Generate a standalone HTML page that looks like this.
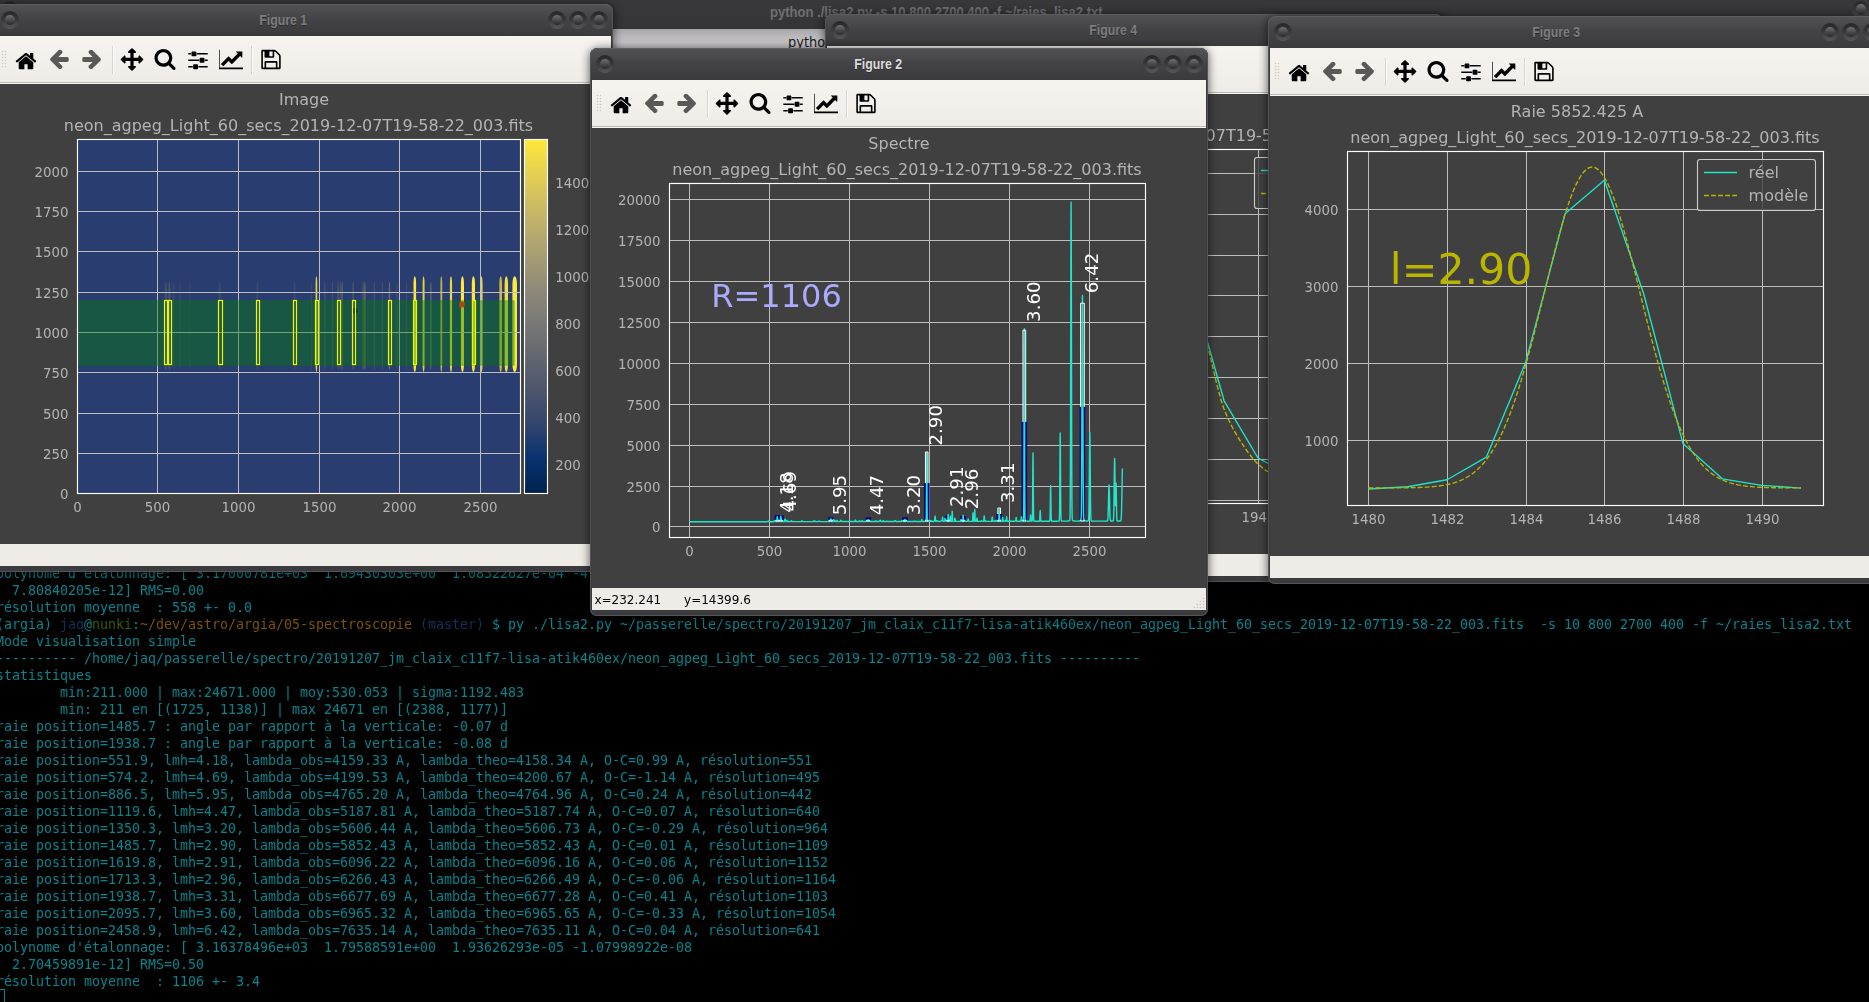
<!DOCTYPE html><html><head><meta charset="utf-8"><title>Figures</title><style>
html,body{margin:0;padding:0;background:#000}
body{width:1869px;height:1002px;overflow:hidden;position:relative;font-family:"DejaVu Sans","Liberation Sans",sans-serif}
svg text{font-family:"DejaVu Sans","Liberation Sans",sans-serif}
.tt{position:absolute;left:0;top:0;width:1869px;height:29px;background:linear-gradient(#38383b,#353538);}
.tt span{position:absolute;left:770px;top:3px;font:bold 15px "Liberation Sans",sans-serif;color:#6f6f72;white-space:nowrap;transform-origin:0 0;transform:scaleX(.87)}
.tab{position:absolute;left:0;top:29px;width:1869px;height:19px;background:linear-gradient(#a9a7aa,#c7c5c8 70%,#c9c7ca);}
.tab span{position:absolute;left:788px;top:4.5px;font:14px "DejaVu Sans","Liberation Sans",sans-serif;color:#1c1c1c;white-space:nowrap;transform-origin:0 0;transform:scaleX(.93)}
.term{position:absolute;left:-4px;top:565px;font:13.288px/17px "DejaVu Sans Mono","Liberation Mono",monospace;color:#07848c;white-space:pre;will-change:transform;letter-spacing:0.0133px}
.term div{height:17px}
.c1{color:#1b2f5c}.c2{color:#3c5c00}.c3{color:#7c5400}.c4{color:#15305f}
.cur{position:absolute;left:-1px;top:989px;width:6px;height:14px;border:1px solid #07848c;box-sizing:border-box}
.win{position:absolute;width:618px;height:568px;background:#3b3b3d;border-radius:8px 8px 7px 7px;box-shadow:inset 0 0 0 1px #545456,0 1px 9px 1px rgba(0,0,0,.55)}
.tbar{position:absolute;left:0;top:0;width:618px;height:32px;border-radius:8px 8px 0 0;background:linear-gradient(#535355,#444446 45%,#3a3a3c);box-shadow:inset 0 1px 0 #5d5d5f,inset 1px 0 0 #545456,inset -1px 0 0 #545456}
.ttl{position:absolute;left:24px;right:65px;top:8px;text-align:center;font:bold 14px "Liberation Sans",sans-serif;color:#7c7c7f;text-shadow:0 1px 0 #2c2c2e}
.ttl span{display:inline-block;transform:scaleX(.88)}
.ttl.act{color:#dcdcdc}
.btn{position:absolute;top:7px;width:18px;height:18px;border-radius:50%;background:linear-gradient(#262628,#39393b 50%,#58585a)}
.btn:after{content:"";position:absolute;left:3.7px;top:3.7px;width:10.6px;height:10.6px;border-radius:50%;background:linear-gradient(#707072,#4a4a4c 50%,#2a2a2c)}
.tb{position:absolute;left:2px;top:32px;width:614px;height:48px;background:linear-gradient(#f7f4f0 0,#efece7 46px,#bebab5 46px,#bebab5 47px,#f7f5f2 47px)}
.grip{position:absolute;left:4px;top:14px;width:6px;height:18px;background-image:radial-gradient(circle at 1.5px 1.5px,#cbc7c1 0.6px,transparent 1.1px);background-size:3px 3px}
.ic{position:absolute;top:11px}
.sep{position:absolute;top:10px;width:1px;height:28px;background:#d8d4ce;border-right:1px solid #fbfaf8}
.cv{position:absolute;left:2px;top:80px;width:614px;height:460px;background:#404040;overflow:hidden}
.cv svg{display:block;will-change:transform}
.sb{position:absolute;left:2px;top:540px;width:614px;height:22px;background:#efece7;font:12px/22px "DejaVu Sans","Liberation Sans",sans-serif;color:#000;white-space:pre}
.sg{position:absolute;left:600px;top:8px}
.sb span{position:absolute;left:2.4px;top:1px}
</style></head><body><div class="tt"><div class="btn" style="left:0.5px;top:0.5px"></div><div class="btn" style="left:1852px;top:0.5px"></div><span>python ./lisa2.py -s 10 800 2700 400 -f ~/raies_lisa2.txt</span></div><div class="tab"><span>python ./lisa2.py -s 10 800 2700 400 -f ~/raies_lisa2.txt</span></div><div class="term"><div>polynome d'étalonnage: [ 3.17000781e+03  1.69430303e+00  1.08522627e-04 -4.42380135e-08</div><div>  7.80840205e-12] RMS=0.00</div><div>résolution moyenne  : 558 +- 0.0</div><div>(argia) <span class="c1">jaq</span>@<span class="c2">nunki</span>:<span class="c3">~/dev/astro/argia/05-spectroscopie</span> <span class="c4">(master)</span> $ py ./lisa2.py ~/passerelle/spectro/20191207_jm_claix_c11f7-lisa-atik460ex/neon_agpeg_Light_60_secs_2019-12-07T19-58-22_003.fits  -s 10 800 2700 400 -f ~/raies_lisa2.txt</div><div>Mode visualisation simple</div><div>---------- /home/jaq/passerelle/spectro/20191207_jm_claix_c11f7-lisa-atik460ex/neon_agpeg_Light_60_secs_2019-12-07T19-58-22_003.fits ----------</div><div>statistiques</div><div>        min:211.000 | max:24671.000 | moy:530.053 | sigma:1192.483</div><div>        min: 211 en [(1725, 1138)] | max 24671 en [(2388, 1177)]</div><div>raie position=1485.7 : angle par rapport à la verticale: -0.07 d</div><div>raie position=1938.7 : angle par rapport à la verticale: -0.08 d</div><div>raie position=551.9, lmh=4.18, lambda_obs=4159.33 A, lambda_theo=4158.34 A, O-C=0.99 A, résolution=551</div><div>raie position=574.2, lmh=4.69, lambda_obs=4199.53 A, lambda_theo=4200.67 A, O-C=-1.14 A, résolution=495</div><div>raie position=886.5, lmh=5.95, lambda_obs=4765.20 A, lambda_theo=4764.96 A, O-C=0.24 A, résolution=442</div><div>raie position=1119.6, lmh=4.47, lambda_obs=5187.81 A, lambda_theo=5187.74 A, O-C=0.07 A, résolution=640</div><div>raie position=1350.3, lmh=3.20, lambda_obs=5606.44 A, lambda_theo=5606.73 A, O-C=-0.29 A, résolution=964</div><div>raie position=1485.7, lmh=2.90, lambda_obs=5852.43 A, lambda_theo=5852.43 A, O-C=0.01 A, résolution=1109</div><div>raie position=1619.8, lmh=2.91, lambda_obs=6096.22 A, lambda_theo=6096.16 A, O-C=0.06 A, résolution=1152</div><div>raie position=1713.3, lmh=2.96, lambda_obs=6266.43 A, lambda_theo=6266.49 A, O-C=-0.06 A, résolution=1164</div><div>raie position=1938.7, lmh=3.31, lambda_obs=6677.69 A, lambda_theo=6677.28 A, O-C=0.41 A, résolution=1103</div><div>raie position=2095.7, lmh=3.60, lambda_obs=6965.32 A, lambda_theo=6965.65 A, O-C=-0.33 A, résolution=1054</div><div>raie position=2458.9, lmh=6.42, lambda_obs=7635.14 A, lambda_theo=7635.11 A, O-C=0.04 A, résolution=641</div><div>polynome d'étalonnage: [ 3.16378496e+03  1.79588591e+00  1.93626293e-05 -1.07998922e-08</div><div>  2.70459891e-12] RMS=0.50</div><div>résolution moyenne  : 1106 +- 3.4</div></div><div class="cur"></div><div class="win " style="left:825px;top:14px;z-index:2"><div class="tbar"><div class="btn" style="left:6px"></div><div class="ttl"><span>Figure 4</span></div><div class="btn" style="right:47px"></div><div class="btn" style="right:26px"></div><div class="btn" style="right:5px"></div></div><div class="tb"><div class="grip"></div><svg class="ic" style="left:17px" viewBox="0 0 72 72" width="24" height="24"><path fill="#000" d="M 57.86 45.94 C 57.86 45.87 57.86 45.79 57.82 45.72 L 35.99 27.73 L 14.18 45.72 C 14.18 45.79 14.14 45.87 14.14 45.94 L 14.14 64.15 C 14.14 65.48 15.24 66.58 16.57 66.58 L 31.14 66.58 L 31.14 52.02 L 40.86 52.02 L 40.86 66.58 L 55.43 66.58 C 56.76 66.58 57.86 65.48 57.86 64.15 z M 66.32 43.33 C 66.73 42.83 66.66 42.03 66.17 41.62 L 57.86 34.71 L 57.86 19.23 C 57.86 18.55 57.33 18.02 56.64 18.02 L 49.36 18.02 C 48.67 18.02 48.14 18.55 48.14 19.23 L 48.14 26.62 L 38.88 18.89 C 37.29 17.56 34.71 17.56 33.12 18.89 L 5.83 41.62 C 5.34 42.03 5.27 42.83 5.68 43.33 L 8.03 46.13 C 8.22 46.35 8.53 46.51 8.83 46.55 C 9.17 46.59 9.47 46.47 9.74 46.28 L 35.99 24.39 L 62.26 46.28 C 62.48 46.47 62.75 46.55 63.06 46.55 C 63.09 46.55 63.13 46.55 63.17 46.55 C 63.47 46.51 63.78 46.35 63.97 46.13 z"/></svg><svg class="ic" style="left:50px" viewBox="0 0 72 72" width="24" height="24"><path fill="#5b5957" d="M 65.14 35.01 C 65.14 32.42 63.43 30.15 60.7 30.15 L 33.99 30.15 L 45.11 19.04 C 46.02 18.12 46.55 16.87 46.55 15.58 C 46.55 14.29 46.02 13.03 45.11 12.13 L 42.26 9.32 C 41.34 8.41 40.13 7.88 38.85 7.88 C 37.55 7.88 36.3 8.41 35.39 9.32 L 10.69 33.99 C 9.82 34.9 9.29 36.14 9.29 37.44 C 9.29 38.73 9.82 39.98 10.69 40.85 L 35.39 65.6 C 36.3 66.47 37.55 67 38.85 67 C 40.13 67 41.39 66.47 42.26 65.6 L 45.11 62.71 C 46.02 61.84 46.55 60.58 46.55 59.3 C 46.55 58.01 46.02 56.76 45.11 55.88 L 33.99 44.73 L 60.7 44.73 C 63.43 44.73 65.14 42.44 65.14 39.86 z"/></svg><svg class="ic" style="left:83px" viewBox="0 0 72 72" width="24" height="24"><path fill="#5b5957" d="M 62.71 37.44 C 62.71 36.14 62.22 34.9 61.31 34.02 L 36.61 9.32 C 35.69 8.41 34.44 7.88 33.15 7.88 C 31.87 7.88 30.64 8.41 29.74 9.32 L 26.89 12.16 C 25.98 13.03 25.45 14.29 25.45 15.58 C 25.45 16.87 25.98 18.12 26.89 19 L 38.01 30.15 L 11.3 30.15 C 8.57 30.15 6.86 32.42 6.86 35.01 L 6.86 39.86 C 6.86 42.44 8.57 44.73 11.3 44.73 L 38.01 44.73 L 26.89 55.84 C 25.98 56.76 25.45 58.01 25.45 59.3 C 25.45 60.58 25.98 61.84 26.89 62.75 L 29.74 65.6 C 30.64 66.47 31.87 67 33.15 67 C 34.44 67 35.69 66.47 36.61 65.6 L 61.31 40.89 C 62.22 39.98 62.71 38.73 62.71 37.44"/></svg><svg class="ic" style="left:123px" viewBox="0 0 72 72" width="24" height="24"><path fill="#000" d="M 70 37.44 C 70 36.8 69.73 36.19 69.28 35.74 L 59.57 26.02 C 59.11 25.56 58.5 25.3 57.86 25.3 C 56.53 25.3 55.43 26.4 55.43 27.73 L 55.43 32.58 L 40.86 32.58 L 40.86 18.02 L 45.71 18.02 C 47.04 18.02 48.14 16.91 48.14 15.58 C 48.14 14.94 47.88 14.33 47.42 13.87 L 37.71 4.16 C 37.25 3.71 36.65 3.44 36 3.44 C 35.35 3.44 34.75 3.71 34.29 4.16 L 24.58 13.87 C 24.12 14.33 23.86 14.94 23.86 15.58 C 23.86 16.91 24.96 18.02 26.29 18.02 L 31.14 18.02 L 31.14 32.58 L 16.57 32.58 L 16.57 27.73 C 16.57 26.4 15.47 25.3 14.14 25.3 C 13.5 25.3 12.89 25.56 12.43 26.02 L 2.72 35.74 C 2.27 36.19 2 36.8 2 37.44 C 2 38.09 2.27 38.69 2.72 39.15 L 12.43 48.86 C 12.89 49.32 13.5 49.58 14.14 49.58 C 15.47 49.58 16.57 48.49 16.57 47.16 L 16.57 42.3 L 31.14 42.3 L 31.14 56.87 L 26.29 56.87 C 24.96 56.87 23.86 57.97 23.86 59.3 C 23.86 59.94 24.12 60.55 24.58 61.01 L 34.29 70.72 C 34.75 71.17 35.35 71.44 36 71.44 C 36.65 71.44 37.25 71.17 37.71 70.72 L 47.42 61.01 C 47.88 60.55 48.14 59.94 48.14 59.3 C 48.14 57.97 47.04 56.87 45.71 56.87 L 40.86 56.87 L 40.86 42.3 L 55.43 42.3 L 55.43 47.16 C 55.43 48.49 56.53 49.58 57.86 49.58 C 58.5 49.58 59.11 49.32 59.57 48.86 L 69.28 39.15 C 69.73 38.69 70 38.09 70 37.44"/></svg><svg class="ic" style="left:156px" viewBox="0 0 72 72" width="24" height="24"><path fill="#000" d="M 48.14 32.59 C 48.14 41.96 40.51 49.59 31.14 49.59 C 21.77 49.59 14.14 41.96 14.14 32.59 C 14.14 23.22 21.77 15.59 31.14 15.59 C 40.51 15.59 48.14 23.22 48.14 32.59 M 67.57 64.16 C 67.57 62.87 67.04 61.62 66.17 60.75 L 53.15 47.73 C 56.22 43.29 57.86 37.98 57.86 32.59 C 57.86 17.82 45.91 5.87 31.14 5.87 C 16.38 5.87 4.43 17.82 4.43 32.59 C 4.43 47.35 16.38 59.3 31.14 59.3 C 36.53 59.3 41.84 57.66 46.28 54.59 L 59.3 67.58 C 60.17 68.48 61.42 69.01 62.72 69.01 C 65.37 69.01 67.57 66.81 67.57 64.16"/></svg><svg class="ic" style="left:189px" viewBox="0 0 72 72" width="24" height="24"><path fill="#000" d="M 20.21 56.87 L 6.86 56.87 L 6.86 61.73 L 20.21 61.73 z M 33.57 52.02 L 23.86 52.02 C 22.53 52.02 21.42 53.11 21.42 54.44 L 21.42 64.16 C 21.42 65.49 22.53 66.58 23.86 66.58 L 33.57 66.58 C 34.9 66.58 36 65.49 36 64.16 L 36 54.44 C 36 53.11 34.9 52.02 33.57 52.02 M 39.64 37.44 L 6.86 37.44 L 6.86 42.3 L 39.64 42.3 z M 15.36 18.02 L 6.86 18.02 L 6.86 22.87 L 15.36 22.87 z M 65.14 56.87 L 37.21 56.87 L 37.21 61.73 L 65.14 61.73 z M 28.71 13.16 L 19 13.16 C 17.67 13.16 16.57 14.26 16.57 15.58 L 16.57 25.3 C 16.57 26.62 17.67 27.73 19 27.73 L 28.71 27.73 C 30.04 27.73 31.14 26.62 31.14 25.3 L 31.14 15.58 C 31.14 14.26 30.04 13.16 28.71 13.16 M 53 32.58 L 43.29 32.58 C 41.96 32.58 40.86 33.69 40.86 35.02 L 40.86 44.73 C 40.86 46.06 41.96 47.16 43.29 47.16 L 53 47.16 C 54.33 47.16 55.42 46.06 55.42 44.73 L 55.42 35.02 C 55.42 33.69 54.33 32.58 53 32.58 M 65.14 37.44 L 56.64 37.44 L 56.64 42.3 L 65.14 42.3 z M 65.14 18.02 L 32.36 18.02 L 32.36 22.87 L 65.14 22.87 z"/></svg><svg class="ic" style="left:222px" viewBox="0 0 72 72" width="24" height="24"><path fill="#000" d="M 74.86 61.73 L 2 61.73 L 2 8.3 L -2.86 8.3 L -2.86 66.58 L 74.86 66.58 z M 70 14.37 C 70 13.69 69.47 13.16 68.79 13.16 L 52.28 13.16 C 51.22 13.16 50.65 14.45 51.45 15.24 L 56.04 19.83 L 38.43 37.44 L 29.59 28.6 C 29.09 28.11 28.34 28.11 27.84 28.6 L 5.64 50.8 L 12.93 58.08 L 28.71 42.3 L 37.56 51.15 C 38.05 51.63 38.8 51.63 39.3 51.15 L 63.33 27.12 L 67.92 31.71 C 68.71 32.51 70 31.94 70 30.87 z"/></svg><svg class="ic" style="left:262px" viewBox="0 0 72 72" width="24" height="24"><path fill="#000" d="M 21.42 61.73 L 21.42 47.16 L 50.57 47.16 L 50.57 61.73 z M 55.42 61.73 L 55.42 45.94 C 55.42 43.93 53.8 42.3 51.79 42.3 L 20.21 42.3 C 18.2 42.3 16.57 43.93 16.57 45.94 L 16.57 61.73 L 11.71 61.73 L 11.71 13.16 L 16.57 13.16 L 16.57 28.94 C 16.57 30.96 18.2 32.58 20.21 32.58 L 42.07 32.58 C 44.09 32.58 45.71 30.96 45.71 28.94 L 45.71 13.16 C 46.48 13.16 47.95 13.77 48.48 14.3 L 59.14 24.96 C 59.64 25.45 60.29 27.01 60.29 27.73 L 60.29 61.73 z M 40.86 26.52 C 40.86 27.16 40.28 27.73 39.64 27.73 L 32.36 27.73 C 31.71 27.73 31.14 27.16 31.14 26.52 L 31.14 14.37 C 31.14 13.72 31.71 13.16 32.36 13.16 L 39.64 13.16 C 40.28 13.16 40.86 13.72 40.86 14.37 z M 65.14 27.73 C 65.14 25.72 64.01 22.95 62.56 21.5 L 51.94 10.88 C 50.49 9.44 47.72 8.3 45.71 8.3 L 10.5 8.3 C 8.49 8.3 6.86 9.93 6.86 11.94 L 6.86 62.94 C 6.86 64.96 8.49 66.58 10.5 66.58 L 61.5 66.58 C 63.51 66.58 65.14 64.96 65.14 62.94 z"/></svg><div class="sep" style="left:115px"></div><div class="sep" style="left:254px"></div></div><div class="cv"><svg viewBox="0 0 614 460" width="614" height="460"><path d="M77.5 79.5H553.5M77.5 120.5H553.5M77.5 161.5H553.5M77.5 201.5H553.5M77.5 242.5H553.5M77.5 283.5H553.5M77.5 324.5H553.5M77.5 365.5H553.5M77.5 406.5H553.5M92.5 55.5V409.5M160.5 55.5V409.5M228.5 55.5V409.5M295.5 55.5V409.5M363.5 55.5V409.5M431.5 55.5V409.5M499.5 55.5V409.5" stroke="#bdbdbd" stroke-width="1" fill="none"/><polyline points="92,404 125.9,403 159.8,401 193.7,396 227.6,376 261.5,286 295.4,146 329.3,76 363.2,186.6 397.1,306.8 431,364 464.9,382 498.8,389 532.7,392" fill="none" stroke="#1fe5cb" stroke-width="1.35" stroke-linejoin="round"/><polyline points="108.95,393 110.64,393 112.34,392.99 114.04,392.97 115.73,392.95 117.43,392.92 119.12,392.89 120.81,392.85 122.51,392.81 124.21,392.76 125.9,392.71 127.59,392.65 129.29,392.59 130.99,392.53 132.68,392.46 134.38,392.39 136.07,392.32 137.76,392.24 139.46,392.16 141.16,392.08 142.85,392 144.54,391.91 146.24,391.79 147.94,391.66 149.63,391.51 151.32,391.33 153.02,391.14 154.71,390.94 156.41,390.72 158.11,390.48 159.8,390.22 161.49,389.96 163.19,389.67 164.89,389.38 166.58,389.07 168.28,388.75 169.97,388.42 171.66,388.08 173.36,387.73 175.06,387.37 176.75,387 178.44,386.6 180.14,386.17 181.84,385.68 183.53,385.16 185.23,384.59 186.92,383.99 188.61,383.34 190.31,382.65 192.01,381.93 193.7,381.17 195.39,380.37 197.09,379.54 198.79,378.67 200.48,377.77 202.18,376.81 203.87,375.7 205.56,374.44 207.26,373.06 208.96,371.58 210.65,370 212.34,368.32 214.04,366.5 215.74,364.55 217.43,362.49 219.12,360.32 220.82,358.04 222.51,355.67 224.21,353.21 225.91,350.67 227.6,348.06 229.29,345.39 230.99,342.64 232.69,339.8 234.38,336.83 236.08,333.72 237.77,330.43 239.46,326.94 241.16,323.22 242.86,319.25 244.55,315 246.24,310.21 247.94,304.71 249.64,298.64 251.33,292.1 253.03,285.24 254.72,278.17 256.41,271.01 258.11,263.9 259.81,256.95 261.5,250.29 263.19,243.7 264.89,237.07 266.59,230.4 268.28,223.71 269.98,217.02 271.67,210.34 273.36,203.68 275.06,197.06 276.76,190.5 278.45,184 280.14,177.4 281.84,170.6 283.54,163.7 285.23,156.8 286.93,149.99 288.62,143.39 290.31,137.08 292.01,131.18 293.71,125.79 295.4,121 297.09,116.49 298.79,111.88 300.49,107.25 302.18,102.65 303.88,98.15 305.57,93.79 307.26,89.63 308.96,85.75 310.66,82.19 312.35,79.02 314.04,76.29 315.74,74.06 317.44,72.4 319.13,71.36 320.82,71 322.52,71.36 324.21,72.4 325.91,74.06 327.61,76.29 329.3,79.02 330.99,82.19 332.69,85.75 334.39,89.63 336.08,93.79 337.77,98.15 339.47,102.65 341.16,107.25 342.86,111.88 344.56,116.49 346.25,121 347.94,125.79 349.64,131.18 351.34,137.08 353.03,143.39 354.73,149.99 356.42,156.8 358.11,163.7 359.81,170.6 361.51,177.4 363.2,184 364.89,190.5 366.59,197.06 368.29,203.68 369.98,210.34 371.68,217.02 373.37,223.71 375.06,230.4 376.76,237.07 378.46,243.7 380.15,250.29 381.84,256.95 383.54,263.9 385.24,271.01 386.93,278.17 388.62,285.24 390.32,292.1 392.01,298.64 393.71,304.71 395.41,310.21 397.1,315 398.79,319.25 400.49,323.22 402.19,326.94 403.88,330.43 405.57,333.72 407.27,336.83 408.96,339.8 410.66,342.64 412.36,345.39 414.05,348.06 415.74,350.67 417.44,353.21 419.14,355.67 420.83,358.04 422.52,360.32 424.22,362.49 425.91,364.55 427.61,366.5 429.31,368.32 431,370 432.69,371.58 434.39,373.06 436.09,374.44 437.78,375.7 439.48,376.81 441.17,377.77 442.86,378.67 444.56,379.54 446.26,380.37 447.95,381.17 449.64,381.93 451.34,382.65 453.04,383.34 454.73,383.99 456.43,384.59 458.12,385.16 459.81,385.68 461.51,386.17 463.21,386.6 464.9,387 466.59,387.37 468.29,387.73 469.99,388.08 471.68,388.42 473.38,388.75 475.07,389.07 476.76,389.38 478.46,389.67 480.16,389.96 481.85,390.22 483.54,390.48 485.24,390.72 486.94,390.94 488.63,391.14 490.32,391.33 492.02,391.51 493.71,391.66 495.41,391.79 497.11,391.91 498.8,392 500.49,392.08 502.19,392.16 503.89,392.24 505.58,392.32 507.27,392.39 508.97,392.46 510.66,392.53 512.36,392.59 514.06,392.65 515.75,392.71 517.44,392.76 519.14,392.81 520.84,392.85 522.53,392.89 524.23,392.92 525.92,392.95 527.61,392.97 529.31,392.99 531.01,393 532.7,393" fill="none" stroke="#bab600" stroke-width="1.35" stroke-dasharray="4.9 2.15"/><rect x="77.5" y="55.5" width="476" height="354" fill="none" stroke="#fff" stroke-width="1.15"/><text x="307" y="21" font-size="16" text-anchor="middle" fill="#b4b4b4" >Raie 6677.282 A</text><text x="315" y="47" font-size="16" text-anchor="middle" fill="#b4b4b4" >neon_agpeg_Light_60_secs_2019-12-07T19-58-22_003.fits</text><text x="92.5" y="428" font-size="13.33" text-anchor="middle" fill="#b4b4b4" >1932</text><text x="160.5" y="428" font-size="13.33" text-anchor="middle" fill="#b4b4b4" >1934</text><text x="228.5" y="428" font-size="13.33" text-anchor="middle" fill="#b4b4b4" >1936</text><text x="295.5" y="428" font-size="13.33" text-anchor="middle" fill="#b4b4b4" >1938</text><text x="363.5" y="428" font-size="13.33" text-anchor="middle" fill="#b4b4b4" >1940</text><text x="431.5" y="428" font-size="13.33" text-anchor="middle" fill="#b4b4b4" >1942</text><text x="499.5" y="428" font-size="13.33" text-anchor="middle" fill="#b4b4b4" >1944</text><text x="68.5" y="125.5" font-size="13.33" text-anchor="end" fill="#b4b4b4" >1000</text><text x="68.5" y="166.35" font-size="13.33" text-anchor="end" fill="#b4b4b4" >900</text><text x="68.5" y="207.2" font-size="13.33" text-anchor="end" fill="#b4b4b4" >800</text><text x="68.5" y="248.05" font-size="13.33" text-anchor="end" fill="#b4b4b4" >700</text><text x="68.5" y="288.9" font-size="13.33" text-anchor="end" fill="#b4b4b4" >600</text><text x="68.5" y="329.75" font-size="13.33" text-anchor="end" fill="#b4b4b4" >500</text><text x="68.5" y="370.6" font-size="13.33" text-anchor="end" fill="#b4b4b4" >400</text><rect x="427.5" y="63.5" width="118" height="51" rx="2.6" fill="#404040" fill-opacity="0.8" stroke="#ccc" stroke-width="1.1"/><path d="M434 76.5H467" stroke="#1fe5cb" stroke-width="1.35"/><path d="M434 99.5H467" stroke="#bab600" stroke-width="1.35" stroke-dasharray="4.9 2.15"/><text x="478.6" y="81.9" font-size="16" text-anchor="start" fill="#b4b4b4" >réel</text><text x="478.6" y="105.2" font-size="16" text-anchor="start" fill="#b4b4b4" >modèle</text></svg></div><div class="sb"><svg class="sg" width="14" height="14" viewBox="0 0 14 14"><g fill="#c4c0ba"><circle cx="11.5" cy="2.4" r="0.75"/><circle cx="8.4" cy="5.5" r="0.75"/><circle cx="11.5" cy="5.5" r="0.75"/><circle cx="5.3" cy="8.5" r="0.75"/><circle cx="8.4" cy="8.5" r="0.75"/><circle cx="11.5" cy="8.5" r="0.75"/><circle cx="2.3" cy="11.6" r="0.75"/><circle cx="5.3" cy="11.6" r="0.75"/><circle cx="8.4" cy="11.6" r="0.75"/><circle cx="11.5" cy="11.6" r="0.75"/></g></svg></div></div><div class="win " style="left:-5px;top:4px;z-index:3"><div class="tbar"><div class="btn" style="left:6px"></div><div class="ttl"><span>Figure 1</span></div><div class="btn" style="right:47px"></div><div class="btn" style="right:26px"></div><div class="btn" style="right:5px"></div></div><div class="tb"><div class="grip"></div><svg class="ic" style="left:17px" viewBox="0 0 72 72" width="24" height="24"><path fill="#000" d="M 57.86 45.94 C 57.86 45.87 57.86 45.79 57.82 45.72 L 35.99 27.73 L 14.18 45.72 C 14.18 45.79 14.14 45.87 14.14 45.94 L 14.14 64.15 C 14.14 65.48 15.24 66.58 16.57 66.58 L 31.14 66.58 L 31.14 52.02 L 40.86 52.02 L 40.86 66.58 L 55.43 66.58 C 56.76 66.58 57.86 65.48 57.86 64.15 z M 66.32 43.33 C 66.73 42.83 66.66 42.03 66.17 41.62 L 57.86 34.71 L 57.86 19.23 C 57.86 18.55 57.33 18.02 56.64 18.02 L 49.36 18.02 C 48.67 18.02 48.14 18.55 48.14 19.23 L 48.14 26.62 L 38.88 18.89 C 37.29 17.56 34.71 17.56 33.12 18.89 L 5.83 41.62 C 5.34 42.03 5.27 42.83 5.68 43.33 L 8.03 46.13 C 8.22 46.35 8.53 46.51 8.83 46.55 C 9.17 46.59 9.47 46.47 9.74 46.28 L 35.99 24.39 L 62.26 46.28 C 62.48 46.47 62.75 46.55 63.06 46.55 C 63.09 46.55 63.13 46.55 63.17 46.55 C 63.47 46.51 63.78 46.35 63.97 46.13 z"/></svg><svg class="ic" style="left:50px" viewBox="0 0 72 72" width="24" height="24"><path fill="#5b5957" d="M 65.14 35.01 C 65.14 32.42 63.43 30.15 60.7 30.15 L 33.99 30.15 L 45.11 19.04 C 46.02 18.12 46.55 16.87 46.55 15.58 C 46.55 14.29 46.02 13.03 45.11 12.13 L 42.26 9.32 C 41.34 8.41 40.13 7.88 38.85 7.88 C 37.55 7.88 36.3 8.41 35.39 9.32 L 10.69 33.99 C 9.82 34.9 9.29 36.14 9.29 37.44 C 9.29 38.73 9.82 39.98 10.69 40.85 L 35.39 65.6 C 36.3 66.47 37.55 67 38.85 67 C 40.13 67 41.39 66.47 42.26 65.6 L 45.11 62.71 C 46.02 61.84 46.55 60.58 46.55 59.3 C 46.55 58.01 46.02 56.76 45.11 55.88 L 33.99 44.73 L 60.7 44.73 C 63.43 44.73 65.14 42.44 65.14 39.86 z"/></svg><svg class="ic" style="left:83px" viewBox="0 0 72 72" width="24" height="24"><path fill="#5b5957" d="M 62.71 37.44 C 62.71 36.14 62.22 34.9 61.31 34.02 L 36.61 9.32 C 35.69 8.41 34.44 7.88 33.15 7.88 C 31.87 7.88 30.64 8.41 29.74 9.32 L 26.89 12.16 C 25.98 13.03 25.45 14.29 25.45 15.58 C 25.45 16.87 25.98 18.12 26.89 19 L 38.01 30.15 L 11.3 30.15 C 8.57 30.15 6.86 32.42 6.86 35.01 L 6.86 39.86 C 6.86 42.44 8.57 44.73 11.3 44.73 L 38.01 44.73 L 26.89 55.84 C 25.98 56.76 25.45 58.01 25.45 59.3 C 25.45 60.58 25.98 61.84 26.89 62.75 L 29.74 65.6 C 30.64 66.47 31.87 67 33.15 67 C 34.44 67 35.69 66.47 36.61 65.6 L 61.31 40.89 C 62.22 39.98 62.71 38.73 62.71 37.44"/></svg><svg class="ic" style="left:123px" viewBox="0 0 72 72" width="24" height="24"><path fill="#000" d="M 70 37.44 C 70 36.8 69.73 36.19 69.28 35.74 L 59.57 26.02 C 59.11 25.56 58.5 25.3 57.86 25.3 C 56.53 25.3 55.43 26.4 55.43 27.73 L 55.43 32.58 L 40.86 32.58 L 40.86 18.02 L 45.71 18.02 C 47.04 18.02 48.14 16.91 48.14 15.58 C 48.14 14.94 47.88 14.33 47.42 13.87 L 37.71 4.16 C 37.25 3.71 36.65 3.44 36 3.44 C 35.35 3.44 34.75 3.71 34.29 4.16 L 24.58 13.87 C 24.12 14.33 23.86 14.94 23.86 15.58 C 23.86 16.91 24.96 18.02 26.29 18.02 L 31.14 18.02 L 31.14 32.58 L 16.57 32.58 L 16.57 27.73 C 16.57 26.4 15.47 25.3 14.14 25.3 C 13.5 25.3 12.89 25.56 12.43 26.02 L 2.72 35.74 C 2.27 36.19 2 36.8 2 37.44 C 2 38.09 2.27 38.69 2.72 39.15 L 12.43 48.86 C 12.89 49.32 13.5 49.58 14.14 49.58 C 15.47 49.58 16.57 48.49 16.57 47.16 L 16.57 42.3 L 31.14 42.3 L 31.14 56.87 L 26.29 56.87 C 24.96 56.87 23.86 57.97 23.86 59.3 C 23.86 59.94 24.12 60.55 24.58 61.01 L 34.29 70.72 C 34.75 71.17 35.35 71.44 36 71.44 C 36.65 71.44 37.25 71.17 37.71 70.72 L 47.42 61.01 C 47.88 60.55 48.14 59.94 48.14 59.3 C 48.14 57.97 47.04 56.87 45.71 56.87 L 40.86 56.87 L 40.86 42.3 L 55.43 42.3 L 55.43 47.16 C 55.43 48.49 56.53 49.58 57.86 49.58 C 58.5 49.58 59.11 49.32 59.57 48.86 L 69.28 39.15 C 69.73 38.69 70 38.09 70 37.44"/></svg><svg class="ic" style="left:156px" viewBox="0 0 72 72" width="24" height="24"><path fill="#000" d="M 48.14 32.59 C 48.14 41.96 40.51 49.59 31.14 49.59 C 21.77 49.59 14.14 41.96 14.14 32.59 C 14.14 23.22 21.77 15.59 31.14 15.59 C 40.51 15.59 48.14 23.22 48.14 32.59 M 67.57 64.16 C 67.57 62.87 67.04 61.62 66.17 60.75 L 53.15 47.73 C 56.22 43.29 57.86 37.98 57.86 32.59 C 57.86 17.82 45.91 5.87 31.14 5.87 C 16.38 5.87 4.43 17.82 4.43 32.59 C 4.43 47.35 16.38 59.3 31.14 59.3 C 36.53 59.3 41.84 57.66 46.28 54.59 L 59.3 67.58 C 60.17 68.48 61.42 69.01 62.72 69.01 C 65.37 69.01 67.57 66.81 67.57 64.16"/></svg><svg class="ic" style="left:189px" viewBox="0 0 72 72" width="24" height="24"><path fill="#000" d="M 20.21 56.87 L 6.86 56.87 L 6.86 61.73 L 20.21 61.73 z M 33.57 52.02 L 23.86 52.02 C 22.53 52.02 21.42 53.11 21.42 54.44 L 21.42 64.16 C 21.42 65.49 22.53 66.58 23.86 66.58 L 33.57 66.58 C 34.9 66.58 36 65.49 36 64.16 L 36 54.44 C 36 53.11 34.9 52.02 33.57 52.02 M 39.64 37.44 L 6.86 37.44 L 6.86 42.3 L 39.64 42.3 z M 15.36 18.02 L 6.86 18.02 L 6.86 22.87 L 15.36 22.87 z M 65.14 56.87 L 37.21 56.87 L 37.21 61.73 L 65.14 61.73 z M 28.71 13.16 L 19 13.16 C 17.67 13.16 16.57 14.26 16.57 15.58 L 16.57 25.3 C 16.57 26.62 17.67 27.73 19 27.73 L 28.71 27.73 C 30.04 27.73 31.14 26.62 31.14 25.3 L 31.14 15.58 C 31.14 14.26 30.04 13.16 28.71 13.16 M 53 32.58 L 43.29 32.58 C 41.96 32.58 40.86 33.69 40.86 35.02 L 40.86 44.73 C 40.86 46.06 41.96 47.16 43.29 47.16 L 53 47.16 C 54.33 47.16 55.42 46.06 55.42 44.73 L 55.42 35.02 C 55.42 33.69 54.33 32.58 53 32.58 M 65.14 37.44 L 56.64 37.44 L 56.64 42.3 L 65.14 42.3 z M 65.14 18.02 L 32.36 18.02 L 32.36 22.87 L 65.14 22.87 z"/></svg><svg class="ic" style="left:222px" viewBox="0 0 72 72" width="24" height="24"><path fill="#000" d="M 74.86 61.73 L 2 61.73 L 2 8.3 L -2.86 8.3 L -2.86 66.58 L 74.86 66.58 z M 70 14.37 C 70 13.69 69.47 13.16 68.79 13.16 L 52.28 13.16 C 51.22 13.16 50.65 14.45 51.45 15.24 L 56.04 19.83 L 38.43 37.44 L 29.59 28.6 C 29.09 28.11 28.34 28.11 27.84 28.6 L 5.64 50.8 L 12.93 58.08 L 28.71 42.3 L 37.56 51.15 C 38.05 51.63 38.8 51.63 39.3 51.15 L 63.33 27.12 L 67.92 31.71 C 68.71 32.51 70 31.94 70 30.87 z"/></svg><svg class="ic" style="left:262px" viewBox="0 0 72 72" width="24" height="24"><path fill="#000" d="M 21.42 61.73 L 21.42 47.16 L 50.57 47.16 L 50.57 61.73 z M 55.42 61.73 L 55.42 45.94 C 55.42 43.93 53.8 42.3 51.79 42.3 L 20.21 42.3 C 18.2 42.3 16.57 43.93 16.57 45.94 L 16.57 61.73 L 11.71 61.73 L 11.71 13.16 L 16.57 13.16 L 16.57 28.94 C 16.57 30.96 18.2 32.58 20.21 32.58 L 42.07 32.58 C 44.09 32.58 45.71 30.96 45.71 28.94 L 45.71 13.16 C 46.48 13.16 47.95 13.77 48.48 14.3 L 59.14 24.96 C 59.64 25.45 60.29 27.01 60.29 27.73 L 60.29 61.73 z M 40.86 26.52 C 40.86 27.16 40.28 27.73 39.64 27.73 L 32.36 27.73 C 31.71 27.73 31.14 27.16 31.14 26.52 L 31.14 14.37 C 31.14 13.72 31.71 13.16 32.36 13.16 L 39.64 13.16 C 40.28 13.16 40.86 13.72 40.86 14.37 z M 65.14 27.73 C 65.14 25.72 64.01 22.95 62.56 21.5 L 51.94 10.88 C 50.49 9.44 47.72 8.3 45.71 8.3 L 10.5 8.3 C 8.49 8.3 6.86 9.93 6.86 11.94 L 6.86 62.94 C 6.86 64.96 8.49 66.58 10.5 66.58 L 61.5 66.58 C 63.51 66.58 65.14 64.96 65.14 62.94 z"/></svg><div class="sep" style="left:115px"></div><div class="sep" style="left:254px"></div></div><div class="cv"><svg viewBox="0 0 614 460" width="614" height="460"><defs><linearGradient id="cb" x1="0" y1="1" x2="0" y2="0"><stop offset="0.0" stop-color="#00224e"/><stop offset="0.1" stop-color="#083370"/><stop offset="0.2" stop-color="#35456c"/><stop offset="0.3" stop-color="#4f576c"/><stop offset="0.4" stop-color="#666970"/><stop offset="0.5" stop-color="#7d7c78"/><stop offset="0.6" stop-color="#948e77"/><stop offset="0.7" stop-color="#aea371"/><stop offset="0.8" stop-color="#c8b866"/><stop offset="0.9" stop-color="#e5cf52"/><stop offset="1.0" stop-color="#fee838"/></linearGradient><linearGradient id="st" x1="0" y1="0" x2="0" y2="1"><stop offset="0" stop-color="#fee838" stop-opacity="0"/><stop offset="0.12" stop-color="#fee838" stop-opacity="1"/><stop offset="0.9" stop-color="#fee838" stop-opacity="1"/><stop offset="1" stop-color="#fee838" stop-opacity="0"/></linearGradient></defs><rect x="80.5" y="55.5" width="443.0" height="354.0" fill="#293d70"/><rect x="167.8" y="197.47" width="2" height="88.61" rx="1.0" ry="8" fill="#fee838" opacity="0.13"/><rect x="171.4" y="197.47" width="2" height="88.61" rx="1.0" ry="8" fill="#fee838" opacity="0.15"/><rect x="175.56" y="197.47" width="2" height="88.61" rx="1.0" ry="8" fill="#fee838" opacity="0.07"/><rect x="182.01" y="197.47" width="2" height="88.61" rx="1.0" ry="8" fill="#fee838" opacity="0.05"/><rect x="191.69" y="197.47" width="2" height="88.61" rx="1.0" ry="8" fill="#fee838" opacity="0.04"/><rect x="221.77" y="197.47" width="2" height="88.61" rx="1.0" ry="8" fill="#fee838" opacity="0.09"/><rect x="259.37" y="197.47" width="2" height="88.61" rx="1.0" ry="8" fill="#fee838" opacity="0.08"/><rect x="296.58" y="197.47" width="2" height="88.61" rx="1.0" ry="8" fill="#fee838" opacity="0.08"/><rect x="313.72" y="197.47" width="1.5" height="88.61" rx="0.75" ry="8" fill="#fee838" opacity="0.07"/><rect x="318.57" y="192.15" width="1.7" height="95.85" rx="0.85" ry="8" fill="#fee838" opacity="0.85"/><rect x="327.11" y="197.47" width="1.5" height="88.61" rx="0.75" ry="8" fill="#fee838" opacity="0.12"/><rect x="334.69" y="197.47" width="1.5" height="88.61" rx="0.75" ry="8" fill="#fee838" opacity="0.1"/><rect x="340.3" y="197.47" width="1.5" height="88.61" rx="0.75" ry="8" fill="#fee838" opacity="0.16"/><rect x="342.43" y="197.47" width="1.5" height="88.61" rx="0.75" ry="8" fill="#fee838" opacity="0.12"/><rect x="344.37" y="197.47" width="1.5" height="88.61" rx="0.75" ry="8" fill="#fee838" opacity="0.22"/><rect x="355.39" y="197.47" width="1.5" height="88.61" rx="0.75" ry="8" fill="#fee838" opacity="0.16"/><rect x="365.34" y="197.47" width="1.5" height="88.61" rx="0.75" ry="8" fill="#fee838" opacity="0.17"/><rect x="367.11" y="197.47" width="1.5" height="88.61" rx="0.75" ry="8" fill="#fee838" opacity="0.25"/><rect x="376.63" y="197.47" width="1.5" height="88.61" rx="0.75" ry="8" fill="#fee838" opacity="0.12"/><rect x="384.69" y="197.47" width="1.5" height="88.61" rx="0.75" ry="8" fill="#fee838" opacity="0.1"/><rect x="391.74" y="197.47" width="1.5" height="88.61" rx="0.75" ry="8" fill="#fee838" opacity="0.28"/><rect x="399.21" y="197.47" width="1.5" height="88.61" rx="0.75" ry="8" fill="#fee838" opacity="0.1"/><rect x="408.89" y="197.47" width="1.5" height="88.61" rx="0.75" ry="8" fill="#fee838" opacity="0.08"/><rect x="416.52" y="192.15" width="2.6" height="95.85" rx="1.3" ry="8" fill="#fee838" opacity="1"/><rect x="425.58" y="192.15" width="2" height="95.85" rx="1.0" ry="8" fill="#fee838" opacity="0.85"/><rect x="433.08" y="197.47" width="1.5" height="88.61" rx="0.75" ry="8" fill="#fee838" opacity="0.25"/><rect x="443.42" y="192.15" width="1.8" height="95.85" rx="0.9" ry="8" fill="#fee838" opacity="0.7"/><rect x="452.9" y="192.15" width="2.2" height="95.85" rx="1.1" ry="8" fill="#fee838" opacity="0.9"/><rect x="463.9" y="192.15" width="3.1" height="95.85" rx="1.55" ry="8" fill="#fee838" opacity="1"/><rect x="474.8" y="192.15" width="3.2" height="95.85" rx="1.6" ry="8" fill="#fee838" opacity="1"/><rect x="483.38" y="192.15" width="2.2" height="95.85" rx="1.1" ry="8" fill="#fee838" opacity="0.9"/><rect x="502.38" y="192.15" width="2.6" height="95.85" rx="1.3" ry="8" fill="#fee838" opacity="0.75"/><rect x="507.62" y="192.15" width="3.4" height="95.85" rx="1.7" ry="8" fill="#fee838" opacity="0.95"/><rect x="515.41" y="192.15" width="4.6" height="95.85" rx="2.3" ry="8" fill="#fee838" opacity="1"/><path d="M80.5 55.5V409.5M160.5 55.5V409.5M241.5 55.5V409.5M322.5 55.5V409.5M402.5 55.5V409.5M483.5 55.5V409.5M80.5 409.5H523.5M80.5 369.5H523.5M80.5 329.5H523.5M80.5 288.5H523.5M80.5 248.5H523.5M80.5 208.5H523.5M80.5 167.5H523.5M80.5 127.5H523.5M80.5 87.5H523.5" stroke="#bdbdbd" stroke-width="1" fill="none"/><rect x="80.5" y="216.8" width="436.73" height="64.44" fill="#008000" fill-opacity="0.4" stroke="#008000" stroke-opacity="0.35" stroke-width="1"/><circle cx="358.02" cy="226.79" r="3" fill="#0c3f1e"/><circle cx="464.97" cy="220.5" r="3" fill="#b5450d"/><rect x="167.5" y="216.5" width="3" height="64" fill="none" stroke="#f4f400" stroke-width="1.2"/><rect x="171.5" y="216.5" width="3" height="64" fill="none" stroke="#f4f400" stroke-width="1.2"/><rect x="221.5" y="216.5" width="4" height="64" fill="none" stroke="#f4f400" stroke-width="1.2"/><rect x="259.5" y="216.5" width="3" height="64" fill="none" stroke="#f4f400" stroke-width="1.2"/><rect x="296.5" y="216.5" width="3" height="64" fill="none" stroke="#f4f400" stroke-width="1.2"/><rect x="318.5" y="216.5" width="3" height="64" fill="none" stroke="#f4f400" stroke-width="1.2"/><rect x="340.5" y="216.5" width="3" height="64" fill="none" stroke="#f4f400" stroke-width="1.2"/><rect x="355.5" y="216.5" width="3" height="64" fill="none" stroke="#f4f400" stroke-width="1.2"/><rect x="391.5" y="216.5" width="3" height="64" fill="none" stroke="#f4f400" stroke-width="1.2"/><rect x="416.5" y="216.5" width="3" height="64" fill="none" stroke="#f4f400" stroke-width="1.2"/><rect x="475.5" y="216.5" width="3" height="64" fill="none" stroke="#f4f400" stroke-width="1.2"/><rect x="80.5" y="55.5" width="443" height="354" fill="none" stroke="#fff" stroke-width="1.15"/><rect x="527.5" y="55.5" width="23" height="354.0" fill="url(#cb)" stroke="#fff" stroke-width="1.15"/><text x="558.3" y="385.98" font-size="13.33" text-anchor="start" fill="#b4b4b4" >200</text><text x="558.3" y="339" font-size="13.33" text-anchor="start" fill="#b4b4b4" >400</text><text x="558.3" y="292.02" font-size="13.33" text-anchor="start" fill="#b4b4b4" >600</text><text x="558.3" y="245.04" font-size="13.33" text-anchor="start" fill="#b4b4b4" >800</text><text x="558.3" y="198.06" font-size="13.33" text-anchor="start" fill="#b4b4b4" >1000</text><text x="558.3" y="151.08" font-size="13.33" text-anchor="start" fill="#b4b4b4" >1200</text><text x="558.3" y="104.1" font-size="13.33" text-anchor="start" fill="#b4b4b4" >1400</text><text x="80.5" y="428" font-size="13.33" text-anchor="middle" fill="#b4b4b4" >0</text><text x="160.5" y="428" font-size="13.33" text-anchor="middle" fill="#b4b4b4" >500</text><text x="241.5" y="428" font-size="13.33" text-anchor="middle" fill="#b4b4b4" >1000</text><text x="322.5" y="428" font-size="13.33" text-anchor="middle" fill="#b4b4b4" >1500</text><text x="402.5" y="428" font-size="13.33" text-anchor="middle" fill="#b4b4b4" >2000</text><text x="483.5" y="428" font-size="13.33" text-anchor="middle" fill="#b4b4b4" >2500</text><text x="71.5" y="414.5" font-size="13.33" text-anchor="end" fill="#b4b4b4" >0</text><text x="71.5" y="374.5" font-size="13.33" text-anchor="end" fill="#b4b4b4" >250</text><text x="71.5" y="334.5" font-size="13.33" text-anchor="end" fill="#b4b4b4" >500</text><text x="71.5" y="293.5" font-size="13.33" text-anchor="end" fill="#b4b4b4" >750</text><text x="71.5" y="253.5" font-size="13.33" text-anchor="end" fill="#b4b4b4" >1000</text><text x="71.5" y="213.5" font-size="13.33" text-anchor="end" fill="#b4b4b4" >1250</text><text x="71.5" y="172.5" font-size="13.33" text-anchor="end" fill="#b4b4b4" >1500</text><text x="71.5" y="132.5" font-size="13.33" text-anchor="end" fill="#b4b4b4" >1750</text><text x="71.5" y="92.5" font-size="13.33" text-anchor="end" fill="#b4b4b4" >2000</text><text x="307" y="21" font-size="16" text-anchor="middle" fill="#b4b4b4" >Image</text><text x="301.5" y="47" font-size="16" text-anchor="middle" fill="#b4b4b4" >neon_agpeg_Light_60_secs_2019-12-07T19-58-22_003.fits</text></svg></div><div class="sb"><svg class="sg" width="14" height="14" viewBox="0 0 14 14"><g fill="#c4c0ba"><circle cx="11.5" cy="2.4" r="0.75"/><circle cx="8.4" cy="5.5" r="0.75"/><circle cx="11.5" cy="5.5" r="0.75"/><circle cx="5.3" cy="8.5" r="0.75"/><circle cx="8.4" cy="8.5" r="0.75"/><circle cx="11.5" cy="8.5" r="0.75"/><circle cx="2.3" cy="11.6" r="0.75"/><circle cx="5.3" cy="11.6" r="0.75"/><circle cx="8.4" cy="11.6" r="0.75"/><circle cx="11.5" cy="11.6" r="0.75"/></g></svg></div></div><div class="win " style="left:1268px;top:16px;z-index:4"><div class="tbar"><div class="btn" style="left:6px"></div><div class="ttl"><span>Figure 3</span></div><div class="btn" style="right:47px"></div><div class="btn" style="right:26px"></div><div class="btn" style="right:5px"></div></div><div class="tb"><div class="grip"></div><svg class="ic" style="left:17px" viewBox="0 0 72 72" width="24" height="24"><path fill="#000" d="M 57.86 45.94 C 57.86 45.87 57.86 45.79 57.82 45.72 L 35.99 27.73 L 14.18 45.72 C 14.18 45.79 14.14 45.87 14.14 45.94 L 14.14 64.15 C 14.14 65.48 15.24 66.58 16.57 66.58 L 31.14 66.58 L 31.14 52.02 L 40.86 52.02 L 40.86 66.58 L 55.43 66.58 C 56.76 66.58 57.86 65.48 57.86 64.15 z M 66.32 43.33 C 66.73 42.83 66.66 42.03 66.17 41.62 L 57.86 34.71 L 57.86 19.23 C 57.86 18.55 57.33 18.02 56.64 18.02 L 49.36 18.02 C 48.67 18.02 48.14 18.55 48.14 19.23 L 48.14 26.62 L 38.88 18.89 C 37.29 17.56 34.71 17.56 33.12 18.89 L 5.83 41.62 C 5.34 42.03 5.27 42.83 5.68 43.33 L 8.03 46.13 C 8.22 46.35 8.53 46.51 8.83 46.55 C 9.17 46.59 9.47 46.47 9.74 46.28 L 35.99 24.39 L 62.26 46.28 C 62.48 46.47 62.75 46.55 63.06 46.55 C 63.09 46.55 63.13 46.55 63.17 46.55 C 63.47 46.51 63.78 46.35 63.97 46.13 z"/></svg><svg class="ic" style="left:50px" viewBox="0 0 72 72" width="24" height="24"><path fill="#5b5957" d="M 65.14 35.01 C 65.14 32.42 63.43 30.15 60.7 30.15 L 33.99 30.15 L 45.11 19.04 C 46.02 18.12 46.55 16.87 46.55 15.58 C 46.55 14.29 46.02 13.03 45.11 12.13 L 42.26 9.32 C 41.34 8.41 40.13 7.88 38.85 7.88 C 37.55 7.88 36.3 8.41 35.39 9.32 L 10.69 33.99 C 9.82 34.9 9.29 36.14 9.29 37.44 C 9.29 38.73 9.82 39.98 10.69 40.85 L 35.39 65.6 C 36.3 66.47 37.55 67 38.85 67 C 40.13 67 41.39 66.47 42.26 65.6 L 45.11 62.71 C 46.02 61.84 46.55 60.58 46.55 59.3 C 46.55 58.01 46.02 56.76 45.11 55.88 L 33.99 44.73 L 60.7 44.73 C 63.43 44.73 65.14 42.44 65.14 39.86 z"/></svg><svg class="ic" style="left:83px" viewBox="0 0 72 72" width="24" height="24"><path fill="#5b5957" d="M 62.71 37.44 C 62.71 36.14 62.22 34.9 61.31 34.02 L 36.61 9.32 C 35.69 8.41 34.44 7.88 33.15 7.88 C 31.87 7.88 30.64 8.41 29.74 9.32 L 26.89 12.16 C 25.98 13.03 25.45 14.29 25.45 15.58 C 25.45 16.87 25.98 18.12 26.89 19 L 38.01 30.15 L 11.3 30.15 C 8.57 30.15 6.86 32.42 6.86 35.01 L 6.86 39.86 C 6.86 42.44 8.57 44.73 11.3 44.73 L 38.01 44.73 L 26.89 55.84 C 25.98 56.76 25.45 58.01 25.45 59.3 C 25.45 60.58 25.98 61.84 26.89 62.75 L 29.74 65.6 C 30.64 66.47 31.87 67 33.15 67 C 34.44 67 35.69 66.47 36.61 65.6 L 61.31 40.89 C 62.22 39.98 62.71 38.73 62.71 37.44"/></svg><svg class="ic" style="left:123px" viewBox="0 0 72 72" width="24" height="24"><path fill="#000" d="M 70 37.44 C 70 36.8 69.73 36.19 69.28 35.74 L 59.57 26.02 C 59.11 25.56 58.5 25.3 57.86 25.3 C 56.53 25.3 55.43 26.4 55.43 27.73 L 55.43 32.58 L 40.86 32.58 L 40.86 18.02 L 45.71 18.02 C 47.04 18.02 48.14 16.91 48.14 15.58 C 48.14 14.94 47.88 14.33 47.42 13.87 L 37.71 4.16 C 37.25 3.71 36.65 3.44 36 3.44 C 35.35 3.44 34.75 3.71 34.29 4.16 L 24.58 13.87 C 24.12 14.33 23.86 14.94 23.86 15.58 C 23.86 16.91 24.96 18.02 26.29 18.02 L 31.14 18.02 L 31.14 32.58 L 16.57 32.58 L 16.57 27.73 C 16.57 26.4 15.47 25.3 14.14 25.3 C 13.5 25.3 12.89 25.56 12.43 26.02 L 2.72 35.74 C 2.27 36.19 2 36.8 2 37.44 C 2 38.09 2.27 38.69 2.72 39.15 L 12.43 48.86 C 12.89 49.32 13.5 49.58 14.14 49.58 C 15.47 49.58 16.57 48.49 16.57 47.16 L 16.57 42.3 L 31.14 42.3 L 31.14 56.87 L 26.29 56.87 C 24.96 56.87 23.86 57.97 23.86 59.3 C 23.86 59.94 24.12 60.55 24.58 61.01 L 34.29 70.72 C 34.75 71.17 35.35 71.44 36 71.44 C 36.65 71.44 37.25 71.17 37.71 70.72 L 47.42 61.01 C 47.88 60.55 48.14 59.94 48.14 59.3 C 48.14 57.97 47.04 56.87 45.71 56.87 L 40.86 56.87 L 40.86 42.3 L 55.43 42.3 L 55.43 47.16 C 55.43 48.49 56.53 49.58 57.86 49.58 C 58.5 49.58 59.11 49.32 59.57 48.86 L 69.28 39.15 C 69.73 38.69 70 38.09 70 37.44"/></svg><svg class="ic" style="left:156px" viewBox="0 0 72 72" width="24" height="24"><path fill="#000" d="M 48.14 32.59 C 48.14 41.96 40.51 49.59 31.14 49.59 C 21.77 49.59 14.14 41.96 14.14 32.59 C 14.14 23.22 21.77 15.59 31.14 15.59 C 40.51 15.59 48.14 23.22 48.14 32.59 M 67.57 64.16 C 67.57 62.87 67.04 61.62 66.17 60.75 L 53.15 47.73 C 56.22 43.29 57.86 37.98 57.86 32.59 C 57.86 17.82 45.91 5.87 31.14 5.87 C 16.38 5.87 4.43 17.82 4.43 32.59 C 4.43 47.35 16.38 59.3 31.14 59.3 C 36.53 59.3 41.84 57.66 46.28 54.59 L 59.3 67.58 C 60.17 68.48 61.42 69.01 62.72 69.01 C 65.37 69.01 67.57 66.81 67.57 64.16"/></svg><svg class="ic" style="left:189px" viewBox="0 0 72 72" width="24" height="24"><path fill="#000" d="M 20.21 56.87 L 6.86 56.87 L 6.86 61.73 L 20.21 61.73 z M 33.57 52.02 L 23.86 52.02 C 22.53 52.02 21.42 53.11 21.42 54.44 L 21.42 64.16 C 21.42 65.49 22.53 66.58 23.86 66.58 L 33.57 66.58 C 34.9 66.58 36 65.49 36 64.16 L 36 54.44 C 36 53.11 34.9 52.02 33.57 52.02 M 39.64 37.44 L 6.86 37.44 L 6.86 42.3 L 39.64 42.3 z M 15.36 18.02 L 6.86 18.02 L 6.86 22.87 L 15.36 22.87 z M 65.14 56.87 L 37.21 56.87 L 37.21 61.73 L 65.14 61.73 z M 28.71 13.16 L 19 13.16 C 17.67 13.16 16.57 14.26 16.57 15.58 L 16.57 25.3 C 16.57 26.62 17.67 27.73 19 27.73 L 28.71 27.73 C 30.04 27.73 31.14 26.62 31.14 25.3 L 31.14 15.58 C 31.14 14.26 30.04 13.16 28.71 13.16 M 53 32.58 L 43.29 32.58 C 41.96 32.58 40.86 33.69 40.86 35.02 L 40.86 44.73 C 40.86 46.06 41.96 47.16 43.29 47.16 L 53 47.16 C 54.33 47.16 55.42 46.06 55.42 44.73 L 55.42 35.02 C 55.42 33.69 54.33 32.58 53 32.58 M 65.14 37.44 L 56.64 37.44 L 56.64 42.3 L 65.14 42.3 z M 65.14 18.02 L 32.36 18.02 L 32.36 22.87 L 65.14 22.87 z"/></svg><svg class="ic" style="left:222px" viewBox="0 0 72 72" width="24" height="24"><path fill="#000" d="M 74.86 61.73 L 2 61.73 L 2 8.3 L -2.86 8.3 L -2.86 66.58 L 74.86 66.58 z M 70 14.37 C 70 13.69 69.47 13.16 68.79 13.16 L 52.28 13.16 C 51.22 13.16 50.65 14.45 51.45 15.24 L 56.04 19.83 L 38.43 37.44 L 29.59 28.6 C 29.09 28.11 28.34 28.11 27.84 28.6 L 5.64 50.8 L 12.93 58.08 L 28.71 42.3 L 37.56 51.15 C 38.05 51.63 38.8 51.63 39.3 51.15 L 63.33 27.12 L 67.92 31.71 C 68.71 32.51 70 31.94 70 30.87 z"/></svg><svg class="ic" style="left:262px" viewBox="0 0 72 72" width="24" height="24"><path fill="#000" d="M 21.42 61.73 L 21.42 47.16 L 50.57 47.16 L 50.57 61.73 z M 55.42 61.73 L 55.42 45.94 C 55.42 43.93 53.8 42.3 51.79 42.3 L 20.21 42.3 C 18.2 42.3 16.57 43.93 16.57 45.94 L 16.57 61.73 L 11.71 61.73 L 11.71 13.16 L 16.57 13.16 L 16.57 28.94 C 16.57 30.96 18.2 32.58 20.21 32.58 L 42.07 32.58 C 44.09 32.58 45.71 30.96 45.71 28.94 L 45.71 13.16 C 46.48 13.16 47.95 13.77 48.48 14.3 L 59.14 24.96 C 59.64 25.45 60.29 27.01 60.29 27.73 L 60.29 61.73 z M 40.86 26.52 C 40.86 27.16 40.28 27.73 39.64 27.73 L 32.36 27.73 C 31.71 27.73 31.14 27.16 31.14 26.52 L 31.14 14.37 C 31.14 13.72 31.71 13.16 32.36 13.16 L 39.64 13.16 C 40.28 13.16 40.86 13.72 40.86 14.37 z M 65.14 27.73 C 65.14 25.72 64.01 22.95 62.56 21.5 L 51.94 10.88 C 50.49 9.44 47.72 8.3 45.71 8.3 L 10.5 8.3 C 8.49 8.3 6.86 9.93 6.86 11.94 L 6.86 62.94 C 6.86 64.96 8.49 66.58 10.5 66.58 L 61.5 66.58 C 63.51 66.58 65.14 64.96 65.14 62.94 z"/></svg><div class="sep" style="left:115px"></div><div class="sep" style="left:254px"></div></div><div class="cv"><svg viewBox="0 0 614 460" width="614" height="460"><path d="M98.5 55.5V409.5M177.5 55.5V409.5M256.5 55.5V409.5M334.5 55.5V409.5M413.5 55.5V409.5M492.5 55.5V409.5M77.5 344.5H553.5M77.5 267.5H553.5M77.5 190.5H553.5M77.5 113.5H553.5" stroke="#bdbdbd" stroke-width="1" fill="none"/><polyline points="98.38,392.97 137.71,390.74 177.03,383.73 216.36,361.17 255.69,266.3 295.01,117.85 334.34,84.2 373.66,197.77 412.99,347.62 452.32,382.8 491.64,389.43 530.97,392.12" fill="none" stroke="#1fe5cb" stroke-width="1.35" stroke-linejoin="round"/><polyline points="98.38,391.96 100.35,391.96 102.31,391.96 104.28,391.96 106.24,391.95 108.21,391.95 110.18,391.95 112.14,391.95 114.11,391.94 116.08,391.94 118.04,391.93 120.01,391.92 121.98,391.91 123.94,391.9 125.91,391.89 127.87,391.88 129.84,391.86 131.81,391.84 133.77,391.82 135.74,391.8 137.71,391.77 139.67,391.74 141.64,391.7 143.6,391.65 145.57,391.6 147.54,391.54 149.5,391.47 151.47,391.39 153.44,391.3 155.4,391.2 157.37,391.09 159.34,390.95 161.3,390.8 163.27,390.63 165.23,390.44 167.2,390.22 169.17,389.98 171.13,389.7 173.1,389.39 175.07,389.05 177.03,388.66 179,388.22 180.97,387.74 182.93,387.2 184.9,386.61 186.86,385.94 188.83,385.21 190.8,384.4 192.76,383.51 194.73,382.53 196.7,381.46 198.66,380.28 200.63,378.99 202.59,377.58 204.56,376.04 206.53,374.38 208.49,372.57 210.46,370.61 212.43,368.49 214.39,366.2 216.36,363.74 218.33,361.1 220.29,358.27 222.26,355.23 224.22,351.99 226.19,348.54 228.16,344.87 230.12,340.98 232.09,336.86 234.06,332.5 236.02,327.91 237.99,323.07 239.95,318 241.92,312.69 243.89,307.13 245.85,301.35 247.82,295.32 249.79,289.08 251.75,282.61 253.72,275.93 255.69,269.05 257.65,261.97 259.62,254.73 261.58,247.32 263.55,239.77 265.52,232.09 267.48,224.31 269.45,216.44 271.42,208.51 273.38,200.55 275.35,192.57 277.31,184.61 279.28,176.7 281.25,168.86 283.21,161.12 285.18,153.51 287.15,146.07 289.11,138.82 291.08,131.79 293.05,125.02 295.01,118.53 296.98,112.35 298.94,106.52 300.91,101.05 302.88,95.97 304.84,91.31 306.81,87.09 308.78,83.33 310.74,80.05 312.71,77.26 314.67,74.98 316.64,73.21 318.61,71.98 320.57,71.28 322.54,71.12 324.51,71.5 326.47,72.41 328.44,73.86 330.41,75.83 332.37,78.31 334.34,81.3 336.3,84.78 338.27,88.73 340.24,93.12 342.2,97.95 344.17,103.19 346.14,108.81 348.1,114.79 350.07,121.09 352.04,127.7 354,134.58 355.97,141.7 357.93,149.03 359.9,156.54 361.87,164.2 363.83,171.98 365.8,179.86 367.77,187.79 369.73,195.76 371.7,203.73 373.66,211.69 375.63,219.59 377.6,227.43 379.56,235.17 381.53,242.8 383.5,250.3 385.46,257.65 387.43,264.82 389.4,271.82 391.36,278.62 393.33,285.22 395.29,291.6 397.26,297.76 399.23,303.69 401.19,309.38 403.16,314.84 405.13,320.06 407.09,325.03 409.06,329.77 411.02,334.27 412.99,338.53 414.96,342.56 416.92,346.37 418.89,349.95 420.86,353.32 422.82,356.47 424.79,359.42 426.76,362.18 428.72,364.75 430.69,367.14 432.65,369.36 434.62,371.41 436.59,373.31 438.55,375.06 440.52,376.67 442.49,378.16 444.45,379.52 446.42,380.76 448.38,381.9 450.35,382.93 452.32,383.88 454.28,384.74 456.25,385.51 458.22,386.22 460.18,386.85 462.15,387.42 464.12,387.94 466.08,388.4 468.05,388.82 470.01,389.19 471.98,389.52 473.95,389.82 475.91,390.08 477.88,390.31 479.85,390.52 481.81,390.7 483.78,390.87 485.75,391.01 487.71,391.13 489.68,391.24 491.64,391.34 493.61,391.43 495.58,391.5 497.54,391.57 499.51,391.62 501.48,391.67 503.44,391.71 505.41,391.75 507.37,391.78 509.34,391.81 511.31,391.83 513.27,391.85 515.24,391.87 517.21,391.88 519.17,391.9 521.14,391.91 523.11,391.92 525.07,391.93 527.04,391.93 529,391.94 530.97,391.94" fill="none" stroke="#bab600" stroke-width="1.35" stroke-dasharray="4.9 2.15"/><rect x="77.5" y="55.5" width="476" height="354" fill="none" stroke="#fff" stroke-width="1.15"/><text x="98.5" y="428" font-size="13.33" text-anchor="middle" fill="#b4b4b4" >1480</text><text x="177.5" y="428" font-size="13.33" text-anchor="middle" fill="#b4b4b4" >1482</text><text x="256.5" y="428" font-size="13.33" text-anchor="middle" fill="#b4b4b4" >1484</text><text x="334.5" y="428" font-size="13.33" text-anchor="middle" fill="#b4b4b4" >1486</text><text x="413.5" y="428" font-size="13.33" text-anchor="middle" fill="#b4b4b4" >1488</text><text x="492.5" y="428" font-size="13.33" text-anchor="middle" fill="#b4b4b4" >1490</text><text x="68.5" y="349.5" font-size="13.33" text-anchor="end" fill="#b4b4b4" >1000</text><text x="68.5" y="272.5" font-size="13.33" text-anchor="end" fill="#b4b4b4" >2000</text><text x="68.5" y="195.5" font-size="13.33" text-anchor="end" fill="#b4b4b4" >3000</text><text x="68.5" y="118.5" font-size="13.33" text-anchor="end" fill="#b4b4b4" >4000</text><text x="307" y="21" font-size="16" text-anchor="middle" fill="#b4b4b4" >Raie 5852.425 A</text><text x="315" y="47" font-size="16" text-anchor="middle" fill="#b4b4b4" >neon_agpeg_Light_60_secs_2019-12-07T19-58-22_003.fits</text><text x="119.8" y="187.9" font-size="42.67" text-anchor="start" fill="#bab600" >l=2.90</text><rect x="427.5" y="63.5" width="118" height="51" rx="2.6" fill="#404040" fill-opacity="0.8" stroke="#ccc" stroke-width="1.1"/><path d="M434 76.5H467" stroke="#1fe5cb" stroke-width="1.35"/><path d="M434 99.5H467" stroke="#bab600" stroke-width="1.35" stroke-dasharray="4.9 2.15"/><text x="478.6" y="81.9" font-size="16" text-anchor="start" fill="#b4b4b4" >réel</text><text x="478.6" y="105.2" font-size="16" text-anchor="start" fill="#b4b4b4" >modèle</text></svg></div><div class="sb"><svg class="sg" width="14" height="14" viewBox="0 0 14 14"><g fill="#c4c0ba"><circle cx="11.5" cy="2.4" r="0.75"/><circle cx="8.4" cy="5.5" r="0.75"/><circle cx="11.5" cy="5.5" r="0.75"/><circle cx="5.3" cy="8.5" r="0.75"/><circle cx="8.4" cy="8.5" r="0.75"/><circle cx="11.5" cy="8.5" r="0.75"/><circle cx="2.3" cy="11.6" r="0.75"/><circle cx="5.3" cy="11.6" r="0.75"/><circle cx="8.4" cy="11.6" r="0.75"/><circle cx="11.5" cy="11.6" r="0.75"/></g></svg></div></div><div class="win " style="left:590px;top:48px;z-index:5"><div class="tbar"><div class="btn" style="left:6px"></div><div class="ttl act"><span>Figure 2</span></div><div class="btn" style="right:47px"></div><div class="btn" style="right:26px"></div><div class="btn" style="right:5px"></div></div><div class="tb"><div class="grip"></div><svg class="ic" style="left:17px" viewBox="0 0 72 72" width="24" height="24"><path fill="#000" d="M 57.86 45.94 C 57.86 45.87 57.86 45.79 57.82 45.72 L 35.99 27.73 L 14.18 45.72 C 14.18 45.79 14.14 45.87 14.14 45.94 L 14.14 64.15 C 14.14 65.48 15.24 66.58 16.57 66.58 L 31.14 66.58 L 31.14 52.02 L 40.86 52.02 L 40.86 66.58 L 55.43 66.58 C 56.76 66.58 57.86 65.48 57.86 64.15 z M 66.32 43.33 C 66.73 42.83 66.66 42.03 66.17 41.62 L 57.86 34.71 L 57.86 19.23 C 57.86 18.55 57.33 18.02 56.64 18.02 L 49.36 18.02 C 48.67 18.02 48.14 18.55 48.14 19.23 L 48.14 26.62 L 38.88 18.89 C 37.29 17.56 34.71 17.56 33.12 18.89 L 5.83 41.62 C 5.34 42.03 5.27 42.83 5.68 43.33 L 8.03 46.13 C 8.22 46.35 8.53 46.51 8.83 46.55 C 9.17 46.59 9.47 46.47 9.74 46.28 L 35.99 24.39 L 62.26 46.28 C 62.48 46.47 62.75 46.55 63.06 46.55 C 63.09 46.55 63.13 46.55 63.17 46.55 C 63.47 46.51 63.78 46.35 63.97 46.13 z"/></svg><svg class="ic" style="left:50px" viewBox="0 0 72 72" width="24" height="24"><path fill="#5b5957" d="M 65.14 35.01 C 65.14 32.42 63.43 30.15 60.7 30.15 L 33.99 30.15 L 45.11 19.04 C 46.02 18.12 46.55 16.87 46.55 15.58 C 46.55 14.29 46.02 13.03 45.11 12.13 L 42.26 9.32 C 41.34 8.41 40.13 7.88 38.85 7.88 C 37.55 7.88 36.3 8.41 35.39 9.32 L 10.69 33.99 C 9.82 34.9 9.29 36.14 9.29 37.44 C 9.29 38.73 9.82 39.98 10.69 40.85 L 35.39 65.6 C 36.3 66.47 37.55 67 38.85 67 C 40.13 67 41.39 66.47 42.26 65.6 L 45.11 62.71 C 46.02 61.84 46.55 60.58 46.55 59.3 C 46.55 58.01 46.02 56.76 45.11 55.88 L 33.99 44.73 L 60.7 44.73 C 63.43 44.73 65.14 42.44 65.14 39.86 z"/></svg><svg class="ic" style="left:83px" viewBox="0 0 72 72" width="24" height="24"><path fill="#5b5957" d="M 62.71 37.44 C 62.71 36.14 62.22 34.9 61.31 34.02 L 36.61 9.32 C 35.69 8.41 34.44 7.88 33.15 7.88 C 31.87 7.88 30.64 8.41 29.74 9.32 L 26.89 12.16 C 25.98 13.03 25.45 14.29 25.45 15.58 C 25.45 16.87 25.98 18.12 26.89 19 L 38.01 30.15 L 11.3 30.15 C 8.57 30.15 6.86 32.42 6.86 35.01 L 6.86 39.86 C 6.86 42.44 8.57 44.73 11.3 44.73 L 38.01 44.73 L 26.89 55.84 C 25.98 56.76 25.45 58.01 25.45 59.3 C 25.45 60.58 25.98 61.84 26.89 62.75 L 29.74 65.6 C 30.64 66.47 31.87 67 33.15 67 C 34.44 67 35.69 66.47 36.61 65.6 L 61.31 40.89 C 62.22 39.98 62.71 38.73 62.71 37.44"/></svg><svg class="ic" style="left:123px" viewBox="0 0 72 72" width="24" height="24"><path fill="#000" d="M 70 37.44 C 70 36.8 69.73 36.19 69.28 35.74 L 59.57 26.02 C 59.11 25.56 58.5 25.3 57.86 25.3 C 56.53 25.3 55.43 26.4 55.43 27.73 L 55.43 32.58 L 40.86 32.58 L 40.86 18.02 L 45.71 18.02 C 47.04 18.02 48.14 16.91 48.14 15.58 C 48.14 14.94 47.88 14.33 47.42 13.87 L 37.71 4.16 C 37.25 3.71 36.65 3.44 36 3.44 C 35.35 3.44 34.75 3.71 34.29 4.16 L 24.58 13.87 C 24.12 14.33 23.86 14.94 23.86 15.58 C 23.86 16.91 24.96 18.02 26.29 18.02 L 31.14 18.02 L 31.14 32.58 L 16.57 32.58 L 16.57 27.73 C 16.57 26.4 15.47 25.3 14.14 25.3 C 13.5 25.3 12.89 25.56 12.43 26.02 L 2.72 35.74 C 2.27 36.19 2 36.8 2 37.44 C 2 38.09 2.27 38.69 2.72 39.15 L 12.43 48.86 C 12.89 49.32 13.5 49.58 14.14 49.58 C 15.47 49.58 16.57 48.49 16.57 47.16 L 16.57 42.3 L 31.14 42.3 L 31.14 56.87 L 26.29 56.87 C 24.96 56.87 23.86 57.97 23.86 59.3 C 23.86 59.94 24.12 60.55 24.58 61.01 L 34.29 70.72 C 34.75 71.17 35.35 71.44 36 71.44 C 36.65 71.44 37.25 71.17 37.71 70.72 L 47.42 61.01 C 47.88 60.55 48.14 59.94 48.14 59.3 C 48.14 57.97 47.04 56.87 45.71 56.87 L 40.86 56.87 L 40.86 42.3 L 55.43 42.3 L 55.43 47.16 C 55.43 48.49 56.53 49.58 57.86 49.58 C 58.5 49.58 59.11 49.32 59.57 48.86 L 69.28 39.15 C 69.73 38.69 70 38.09 70 37.44"/></svg><svg class="ic" style="left:156px" viewBox="0 0 72 72" width="24" height="24"><path fill="#000" d="M 48.14 32.59 C 48.14 41.96 40.51 49.59 31.14 49.59 C 21.77 49.59 14.14 41.96 14.14 32.59 C 14.14 23.22 21.77 15.59 31.14 15.59 C 40.51 15.59 48.14 23.22 48.14 32.59 M 67.57 64.16 C 67.57 62.87 67.04 61.62 66.17 60.75 L 53.15 47.73 C 56.22 43.29 57.86 37.98 57.86 32.59 C 57.86 17.82 45.91 5.87 31.14 5.87 C 16.38 5.87 4.43 17.82 4.43 32.59 C 4.43 47.35 16.38 59.3 31.14 59.3 C 36.53 59.3 41.84 57.66 46.28 54.59 L 59.3 67.58 C 60.17 68.48 61.42 69.01 62.72 69.01 C 65.37 69.01 67.57 66.81 67.57 64.16"/></svg><svg class="ic" style="left:189px" viewBox="0 0 72 72" width="24" height="24"><path fill="#000" d="M 20.21 56.87 L 6.86 56.87 L 6.86 61.73 L 20.21 61.73 z M 33.57 52.02 L 23.86 52.02 C 22.53 52.02 21.42 53.11 21.42 54.44 L 21.42 64.16 C 21.42 65.49 22.53 66.58 23.86 66.58 L 33.57 66.58 C 34.9 66.58 36 65.49 36 64.16 L 36 54.44 C 36 53.11 34.9 52.02 33.57 52.02 M 39.64 37.44 L 6.86 37.44 L 6.86 42.3 L 39.64 42.3 z M 15.36 18.02 L 6.86 18.02 L 6.86 22.87 L 15.36 22.87 z M 65.14 56.87 L 37.21 56.87 L 37.21 61.73 L 65.14 61.73 z M 28.71 13.16 L 19 13.16 C 17.67 13.16 16.57 14.26 16.57 15.58 L 16.57 25.3 C 16.57 26.62 17.67 27.73 19 27.73 L 28.71 27.73 C 30.04 27.73 31.14 26.62 31.14 25.3 L 31.14 15.58 C 31.14 14.26 30.04 13.16 28.71 13.16 M 53 32.58 L 43.29 32.58 C 41.96 32.58 40.86 33.69 40.86 35.02 L 40.86 44.73 C 40.86 46.06 41.96 47.16 43.29 47.16 L 53 47.16 C 54.33 47.16 55.42 46.06 55.42 44.73 L 55.42 35.02 C 55.42 33.69 54.33 32.58 53 32.58 M 65.14 37.44 L 56.64 37.44 L 56.64 42.3 L 65.14 42.3 z M 65.14 18.02 L 32.36 18.02 L 32.36 22.87 L 65.14 22.87 z"/></svg><svg class="ic" style="left:222px" viewBox="0 0 72 72" width="24" height="24"><path fill="#000" d="M 74.86 61.73 L 2 61.73 L 2 8.3 L -2.86 8.3 L -2.86 66.58 L 74.86 66.58 z M 70 14.37 C 70 13.69 69.47 13.16 68.79 13.16 L 52.28 13.16 C 51.22 13.16 50.65 14.45 51.45 15.24 L 56.04 19.83 L 38.43 37.44 L 29.59 28.6 C 29.09 28.11 28.34 28.11 27.84 28.6 L 5.64 50.8 L 12.93 58.08 L 28.71 42.3 L 37.56 51.15 C 38.05 51.63 38.8 51.63 39.3 51.15 L 63.33 27.12 L 67.92 31.71 C 68.71 32.51 70 31.94 70 30.87 z"/></svg><svg class="ic" style="left:262px" viewBox="0 0 72 72" width="24" height="24"><path fill="#000" d="M 21.42 61.73 L 21.42 47.16 L 50.57 47.16 L 50.57 61.73 z M 55.42 61.73 L 55.42 45.94 C 55.42 43.93 53.8 42.3 51.79 42.3 L 20.21 42.3 C 18.2 42.3 16.57 43.93 16.57 45.94 L 16.57 61.73 L 11.71 61.73 L 11.71 13.16 L 16.57 13.16 L 16.57 28.94 C 16.57 30.96 18.2 32.58 20.21 32.58 L 42.07 32.58 C 44.09 32.58 45.71 30.96 45.71 28.94 L 45.71 13.16 C 46.48 13.16 47.95 13.77 48.48 14.3 L 59.14 24.96 C 59.64 25.45 60.29 27.01 60.29 27.73 L 60.29 61.73 z M 40.86 26.52 C 40.86 27.16 40.28 27.73 39.64 27.73 L 32.36 27.73 C 31.71 27.73 31.14 27.16 31.14 26.52 L 31.14 14.37 C 31.14 13.72 31.71 13.16 32.36 13.16 L 39.64 13.16 C 40.28 13.16 40.86 13.72 40.86 14.37 z M 65.14 27.73 C 65.14 25.72 64.01 22.95 62.56 21.5 L 51.94 10.88 C 50.49 9.44 47.72 8.3 45.71 8.3 L 10.5 8.3 C 8.49 8.3 6.86 9.93 6.86 11.94 L 6.86 62.94 C 6.86 64.96 8.49 66.58 10.5 66.58 L 61.5 66.58 C 63.51 66.58 65.14 64.96 65.14 62.94 z"/></svg><div class="sep" style="left:115px"></div><div class="sep" style="left:254px"></div></div><div class="cv"><svg viewBox="0 0 614 460" width="614" height="460"><path d="M97.5 55.5V409.5M177.5 55.5V409.5M257.5 55.5V409.5M337.5 55.5V409.5M417.5 55.5V409.5M497.5 55.5V409.5M77.5 398.5H553.5M77.5 358.5H553.5M77.5 317.5H553.5M77.5 276.5H553.5M77.5 235.5H553.5M77.5 194.5H553.5M77.5 153.5H553.5M77.5 112.5H553.5M77.5 71.5H553.5" stroke="#bdbdbd" stroke-width="1" fill="none"/><rect x="182.51" y="387.3" width="5.6" height="4.5" fill="#00008b"/><rect x="186.08" y="387.3" width="5.6" height="4.5" fill="#00008b"/><rect x="236.05" y="389.3" width="5.6" height="2.5" fill="#00008b"/><rect x="273.35" y="389.3" width="5.6" height="2.5" fill="#00008b"/><rect x="310.26" y="389.3" width="5.6" height="2.5" fill="#00008b"/><rect x="331.92" y="355.1" width="5.6" height="36.7" fill="#00008b"/><rect x="353.38" y="387.5" width="5.6" height="4.3" fill="#00008b"/><rect x="368.34" y="388" width="5.6" height="3.8" fill="#00008b"/><rect x="404.4" y="386" width="5.6" height="5.8" fill="#00008b"/><rect x="429.53" y="293.9" width="5.6" height="97.9" fill="#00008b"/><rect x="487.64" y="278.8" width="5.6" height="113" fill="#00008b"/><polyline points="97.81,393.81 97.97,393.81 98.13,393.81 98.29,393.81 98.45,393.81 98.61,393.81 98.77,393.81 98.93,393.81 99.09,393.81 99.25,393.81 99.41,393.8 99.57,393.8 99.73,393.8 99.89,393.8 100.05,393.8 100.21,393.8 100.37,393.8 100.53,393.8 100.69,393.8 100.85,393.8 101.01,393.8 101.17,393.8 101.33,393.8 101.49,393.8 101.65,393.8 101.81,393.8 101.97,393.8 102.13,393.8 102.29,393.8 102.45,393.8 102.61,393.8 102.77,393.8 102.93,393.8 103.09,393.8 103.25,393.8 103.41,393.8 103.57,393.8 103.73,393.8 103.89,393.8 104.05,393.8 104.21,393.8 104.37,393.8 104.53,393.8 104.69,393.8 104.85,393.8 105.01,393.8 105.17,393.8 105.33,393.8 105.49,393.8 105.65,393.8 105.81,393.8 105.97,393.8 106.13,393.79 106.29,393.79 106.45,393.79 106.61,393.79 106.77,393.79 106.93,393.79 107.09,393.79 107.25,393.79 107.41,393.79 107.57,393.79 107.73,393.79 107.89,393.79 108.05,393.79 108.21,393.79 108.37,393.79 108.53,393.79 108.69,393.79 108.85,393.79 109.01,393.79 109.17,393.79 109.33,393.79 109.49,393.79 109.65,393.79 109.81,393.79 109.97,393.79 110.13,393.79 110.29,393.79 110.45,393.79 110.61,393.79 110.77,393.79 110.93,393.79 111.09,393.79 111.25,393.79 111.41,393.79 111.57,393.79 111.73,393.79 111.89,393.79 112.05,393.79 112.21,393.79 112.37,393.79 112.53,393.79 112.69,393.78 112.85,393.78 113.01,393.78 113.17,393.78 113.33,393.78 113.49,393.78 113.65,393.78 113.81,393.78 113.97,393.78 114.13,393.78 114.29,393.78 114.45,393.78 114.61,393.78 114.77,393.78 114.93,393.78 115.09,393.78 115.25,393.78 115.41,393.78 115.57,393.78 115.73,393.78 115.89,393.78 116.05,393.78 116.21,393.78 116.37,393.78 116.53,393.78 116.69,393.78 116.85,393.78 117.01,393.78 117.17,393.78 117.33,393.78 117.49,393.78 117.65,393.78 117.81,393.78 117.97,393.78 118.13,393.78 118.29,393.78 118.45,393.78 118.61,393.78 118.77,393.78 118.93,393.78 119.09,393.78 119.25,393.77 119.41,393.77 119.57,393.77 119.73,393.77 119.89,393.77 120.05,393.77 120.21,393.77 120.37,393.77 120.53,393.77 120.69,393.77 120.85,393.77 121.01,393.77 121.17,393.77 121.33,393.77 121.49,393.77 121.65,393.77 121.81,393.77 121.97,393.77 122.13,393.77 122.29,393.77 122.45,393.77 122.61,393.77 122.77,393.77 122.93,393.77 123.09,393.77 123.25,393.77 123.41,393.77 123.57,393.77 123.73,393.77 123.89,393.77 124.05,393.77 124.21,393.77 124.37,393.77 124.53,393.77 124.69,393.77 124.85,393.77 125.01,393.77 125.17,393.77 125.33,393.77 125.49,393.77 125.65,393.77 125.81,393.76 125.97,393.76 126.13,393.76 126.29,393.76 126.45,393.76 126.61,393.76 126.77,393.76 126.93,393.76 127.09,393.76 127.25,393.76 127.41,393.76 127.57,393.76 127.73,393.76 127.89,393.76 128.05,393.76 128.21,393.76 128.37,393.76 128.53,393.76 128.69,393.76 128.85,393.76 129.01,393.76 129.17,393.76 129.33,393.76 129.49,393.76 129.65,393.76 129.81,393.76 129.97,393.76 130.13,393.76 130.29,393.76 130.45,393.76 130.61,393.76 130.77,393.76 130.93,393.76 131.09,393.76 131.25,393.76 131.41,393.76 131.57,393.76 131.73,393.76 131.89,393.76 132.05,393.76 132.21,393.76 132.37,393.75 132.53,393.75 132.69,393.75 132.85,393.75 133.01,393.75 133.17,393.75 133.33,393.75 133.49,393.75 133.65,393.75 133.81,393.75 133.97,393.75 134.13,393.75 134.29,393.75 134.45,393.75 134.61,393.75 134.77,393.75 134.93,393.75 135.09,393.75 135.25,393.75 135.41,393.75 135.57,393.75 135.73,393.75 135.89,393.75 136.05,393.75 136.21,393.75 136.37,393.75 136.53,393.75 136.69,393.75 136.85,393.75 137.01,393.75 137.17,393.75 137.33,393.75 137.49,393.75 137.65,393.75 137.81,393.75 137.97,393.75 138.13,393.75 138.29,393.75 138.45,393.75 138.61,393.75 138.77,393.75 138.93,393.75 139.09,393.74 139.25,393.74 139.41,393.74 139.57,393.74 139.73,393.74 139.89,393.74 140.05,393.74 140.21,393.74 140.37,393.74 140.53,393.74 140.69,393.74 140.85,393.74 141.01,393.74 141.17,393.74 141.33,393.74 141.49,393.74 141.65,393.74 141.81,393.74 141.97,393.74 142.13,393.74 142.29,393.74 142.45,393.74 142.61,393.74 142.77,393.74 142.93,393.74 143.09,393.74 143.25,393.74 143.41,393.74 143.57,393.74 143.73,393.74 143.89,393.74 144.05,393.74 144.21,393.74 144.37,393.74 144.53,393.74 144.69,393.74 144.85,393.74 145.01,393.74 145.17,393.74 145.33,393.74 145.49,393.74 145.65,393.73 145.81,393.73 145.97,393.73 146.13,393.73 146.29,393.73 146.45,393.73 146.61,393.73 146.77,393.73 146.93,393.73 147.09,393.73 147.25,393.73 147.41,393.73 147.57,393.73 147.73,393.73 147.89,393.73 148.05,393.73 148.21,393.73 148.37,393.73 148.53,393.73 148.69,393.73 148.85,393.73 149.01,393.73 149.17,393.73 149.33,393.73 149.49,393.73 149.65,393.73 149.81,393.73 149.97,393.73 150.13,393.73 150.29,393.73 150.45,393.73 150.61,393.73 150.77,393.73 150.93,393.73 151.09,393.73 151.25,393.73 151.41,393.73 151.57,393.73 151.73,393.73 151.89,393.73 152.05,393.73 152.21,393.72 152.37,393.72 152.53,393.72 152.69,393.72 152.85,393.72 153.01,393.72 153.17,393.72 153.33,393.72 153.49,393.72 153.65,393.72 153.81,393.72 153.97,393.72 154.13,393.72 154.29,393.72 154.45,393.72 154.61,393.72 154.77,393.72 154.93,393.72 155.09,393.72 155.25,393.72 155.41,393.72 155.57,393.72 155.73,393.72 155.89,393.72 156.05,393.72 156.21,393.72 156.37,393.72 156.53,393.72 156.69,393.72 156.85,393.72 157.01,393.72 157.17,393.72 157.33,393.72 157.49,393.72 157.65,393.72 157.81,393.72 157.97,393.72 158.13,393.72 158.29,393.72 158.45,393.72 158.61,393.72 158.77,393.71 158.93,393.71 159.09,393.71 159.25,393.71 159.41,393.71 159.57,393.71 159.73,393.71 159.89,393.71 160.05,393.71 160.21,393.71 160.37,393.71 160.53,393.71 160.69,393.71 160.85,393.71 161.01,393.71 161.17,393.71 161.33,393.71 161.49,393.71 161.65,393.71 161.81,393.71 161.97,393.71 162.13,393.71 162.29,393.71 162.45,393.71 162.61,393.71 162.77,393.71 162.93,393.71 163.09,393.71 163.25,393.71 163.41,393.71 163.57,393.71 163.73,393.71 163.89,393.71 164.05,393.71 164.21,393.71 164.37,393.71 164.53,393.71 164.69,393.71 164.85,393.71 165.01,393.71 165.17,393.71 165.33,393.7 165.49,393.7 165.65,393.7 165.81,393.7 165.97,393.7 166.13,393.7 166.29,393.7 166.45,393.7 166.61,393.7 166.77,393.7 166.93,393.7 167.09,393.7 167.25,393.7 167.41,393.7 167.57,393.7 167.73,393.7 167.89,393.7 168.05,393.7 168.21,393.7 168.37,393.7 168.53,393.7 168.69,393.7 168.85,393.7 169.01,393.7 169.17,393.7 169.33,393.7 169.49,393.7 169.65,393.7 169.81,393.7 169.97,393.7 170.13,393.7 170.29,393.7 170.45,393.7 170.61,393.7 170.77,393.7 170.93,393.7 171.09,393.7 171.25,393.7 171.41,393.7 171.57,393.7 171.73,393.7 171.89,393.69 172.05,393.69 172.21,393.69 172.37,393.69 172.53,393.69 172.69,393.69 172.85,393.69 173.01,393.69 173.17,393.69 173.33,393.69 173.49,393.69 173.65,393.69 173.81,393.69 173.97,393.69 174.13,393.69 174.29,393.69 174.45,393.69 174.61,393.68 174.77,393.65 174.93,393.58 175.09,393.46 175.25,393.39 175.41,393.44 175.57,393.56 175.73,393.64 175.89,393.68 176.05,393.68 176.21,393.65 176.37,393.54 176.53,393.29 176.69,393.01 176.85,392.95 177.01,393.17 177.17,393.45 177.33,393.62 177.49,393.67 177.65,393.68 177.81,393.69 177.97,393.69 178.13,393.68 178.29,393.68 178.45,393.68 178.61,393.68 178.77,393.68 178.93,393.68 179.09,393.68 179.25,393.68 179.41,393.68 179.57,393.68 179.73,393.68 179.89,393.68 180.05,393.68 180.21,393.68 180.37,393.68 180.53,393.68 180.69,393.68 180.85,393.68 181.01,393.68 181.17,393.68 181.33,393.68 181.49,393.68 181.65,393.67 181.81,393.64 181.97,393.53 182.13,393.24 182.29,392.87 182.45,392.72 182.61,392.94 182.77,393.32 182.93,393.56 183.09,393.65 183.25,393.67 183.41,393.67 183.57,393.67 183.73,393.67 183.89,393.67 184.05,393.67 184.21,393.66 184.37,393.64 184.53,393.54 184.69,393.18 184.85,392.31 185.01,390.83 185.17,389.3 185.33,388.73 185.49,389.56 185.65,391.15 185.81,392.53 185.97,393.28 186.13,393.56 186.29,393.64 186.45,393.66 186.61,393.66 186.77,393.66 186.93,393.66 187.09,393.66 187.25,393.66 187.41,393.66 187.57,393.65 187.73,393.65 187.89,393.61 188.05,393.46 188.21,393.05 188.37,392.14 188.53,390.68 188.69,389.12 188.85,388.25 189.01,388.64 189.17,390.03 189.33,391.61 189.49,392.75 189.65,393.34 189.81,393.57 189.97,393.63 190.13,393.65 190.29,393.65 190.45,393.66 190.61,393.66 190.77,393.66 190.93,393.66 191.09,393.65 191.25,393.62 191.41,393.53 191.57,393.38 191.73,393.28 191.89,393.33 192.05,393.45 192.21,393.51 192.37,393.38 192.53,392.98 192.69,392.28 192.85,391.43 193.01,390.95 193.17,391.23 193.33,392.07 193.49,392.88 193.65,393.36 193.81,393.56 193.97,393.61 194.13,393.59 194.29,393.47 194.45,393.22 194.61,392.85 194.77,392.49 194.93,392.34 195.09,392.49 195.25,392.85 195.41,393.22 195.57,393.47 195.73,393.59 195.89,393.64 196.05,393.65 196.21,393.65 196.37,393.65 196.53,393.65 196.69,393.65 196.85,393.65 197.01,393.65 197.17,393.65 197.33,393.65 197.49,393.65 197.65,393.65 197.81,393.65 197.97,393.65 198.13,393.65 198.29,393.65 198.45,393.64 198.61,393.61 198.77,393.54 198.93,393.38 199.09,393.15 199.25,392.92 199.41,392.83 199.57,392.92 199.73,393.15 199.89,393.38 200.05,393.54 200.21,393.61 200.37,393.64 200.53,393.65 200.69,393.65 200.85,393.65 201.01,393.65 201.17,393.64 201.33,393.59 201.49,393.5 201.65,393.39 201.81,393.36 201.97,393.45 202.13,393.56 202.29,393.62 202.45,393.64 202.61,393.65 202.77,393.65 202.93,393.65 203.09,393.65 203.25,393.65 203.41,393.65 203.57,393.65 203.73,393.65 203.89,393.65 204.05,393.65 204.21,393.65 204.37,393.65 204.53,393.65 204.69,393.64 204.85,393.64 205.01,393.64 205.17,393.64 205.33,393.64 205.49,393.64 205.65,393.64 205.81,393.64 205.97,393.64 206.13,393.64 206.29,393.64 206.45,393.64 206.61,393.64 206.77,393.64 206.93,393.64 207.09,393.64 207.25,393.64 207.41,393.64 207.57,393.64 207.73,393.64 207.89,393.64 208.05,393.64 208.21,393.64 208.37,393.64 208.53,393.64 208.69,393.64 208.85,393.64 209.01,393.64 209.17,393.63 209.33,393.59 209.49,393.45 209.65,393.14 209.81,392.79 209.97,392.71 210.13,392.99 210.29,393.35 210.45,393.55 210.61,393.62 210.77,393.63 210.93,393.64 211.09,393.64 211.25,393.64 211.41,393.64 211.57,393.63 211.73,393.63 211.89,393.63 212.05,393.63 212.21,393.63 212.37,393.63 212.53,393.63 212.69,393.63 212.85,393.63 213.01,393.63 213.17,393.63 213.33,393.63 213.49,393.63 213.65,393.63 213.81,393.63 213.97,393.63 214.13,393.63 214.29,393.63 214.45,393.63 214.61,393.63 214.77,393.63 214.93,393.63 215.09,393.63 215.25,393.63 215.41,393.63 215.57,393.63 215.73,393.63 215.89,393.63 216.05,393.63 216.21,393.63 216.37,393.63 216.53,393.63 216.69,393.63 216.85,393.63 217.01,393.63 217.17,393.63 217.33,393.63 217.49,393.63 217.65,393.63 217.81,393.63 217.97,393.63 218.13,393.62 218.29,393.62 218.45,393.62 218.61,393.62 218.77,393.62 218.93,393.62 219.09,393.62 219.25,393.62 219.41,393.62 219.57,393.62 219.73,393.62 219.89,393.62 220.05,393.62 220.21,393.62 220.37,393.62 220.53,393.62 220.69,393.62 220.85,393.61 221.01,393.56 221.17,393.43 221.33,393.21 221.49,393.05 221.65,393.11 221.81,393.32 221.97,393.49 222.13,393.49 222.29,393.32 222.45,393.08 222.61,392.95 222.77,392.97 222.93,393.04 223.09,393.13 223.25,393.3 223.41,393.47 223.57,393.57 223.73,393.61 223.89,393.62 224.05,393.62 224.21,393.62 224.37,393.62 224.53,393.62 224.69,393.61 224.85,393.61 225.01,393.61 225.17,393.61 225.33,393.61 225.49,393.61 225.65,393.61 225.81,393.61 225.97,393.61 226.13,393.61 226.29,393.59 226.45,393.53 226.61,393.4 226.77,393.23 226.93,393.17 227.09,393.28 227.25,393.4 227.41,393.38 227.57,393.27 227.73,393.22 227.89,393.32 228.05,393.47 228.21,393.57 228.37,393.6 228.53,393.61 228.69,393.61 228.85,393.61 229.01,393.61 229.17,393.61 229.33,393.61 229.49,393.61 229.65,393.61 229.81,393.61 229.97,393.61 230.13,393.61 230.29,393.61 230.45,393.61 230.61,393.61 230.77,393.61 230.93,393.61 231.09,393.6 231.25,393.6 231.41,393.6 231.57,393.6 231.73,393.6 231.89,393.6 232.05,393.6 232.21,393.6 232.37,393.6 232.53,393.6 232.69,393.6 232.85,393.6 233.01,393.6 233.17,393.6 233.33,393.6 233.49,393.6 233.65,393.6 233.81,393.6 233.97,393.6 234.13,393.6 234.29,393.6 234.45,393.6 234.61,393.6 234.77,393.6 234.93,393.6 235.09,393.6 235.25,393.6 235.41,393.6 235.57,393.6 235.73,393.6 235.89,393.59 236.05,393.57 236.21,393.51 236.37,393.39 236.53,393.26 236.69,393.25 236.85,393.36 237.01,393.49 237.17,393.56 237.33,393.58 237.49,393.58 237.65,393.56 237.81,393.5 237.97,393.37 238.13,393.1 238.29,392.66 238.45,392.08 238.61,391.49 238.77,391.03 238.93,390.78 239.09,390.82 239.25,391.27 239.41,392.04 239.57,392.8 239.73,393.27 239.89,393.48 240.05,393.55 240.21,393.58 240.37,393.58 240.53,393.58 240.69,393.58 240.85,393.55 241.01,393.42 241.17,393.04 241.33,392.35 241.49,391.67 241.65,391.49 241.81,391.88 241.97,392.48 242.13,392.98 242.29,393.27 242.45,393.36 242.61,393.19 242.77,392.85 242.93,392.64 243.09,392.79 243.25,393.16 243.41,393.44 243.57,393.55 243.73,393.58 243.89,393.58 244.05,393.58 244.21,393.57 244.37,393.52 244.53,393.36 244.69,393.01 244.85,392.56 245.01,392.28 245.17,392.42 245.33,392.87 245.49,393.29 245.65,393.5 245.81,393.57 245.97,393.58 246.13,393.58 246.29,393.58 246.45,393.58 246.61,393.58 246.77,393.58 246.93,393.58 247.09,393.58 247.25,393.58 247.41,393.58 247.57,393.58 247.73,393.58 247.89,393.58 248.05,393.57 248.21,393.54 248.37,393.43 248.53,393.14 248.69,392.67 248.85,392.25 249.01,392.22 249.17,392.57 249.33,393.01 249.49,393.32 249.65,393.48 249.81,393.54 249.97,393.57 250.13,393.57 250.29,393.57 250.45,393.57 250.61,393.57 250.77,393.57 250.93,393.57 251.09,393.57 251.25,393.57 251.41,393.57 251.57,393.57 251.73,393.57 251.89,393.57 252.05,393.57 252.21,393.57 252.37,393.57 252.53,393.57 252.69,393.57 252.85,393.57 253.01,393.57 253.17,393.57 253.33,393.57 253.49,393.57 253.65,393.57 253.81,393.57 253.97,393.57 254.13,393.57 254.29,393.57 254.45,393.57 254.61,393.57 254.77,393.57 254.93,393.57 255.09,393.57 255.25,393.57 255.41,393.57 255.57,393.57 255.73,393.57 255.89,393.57 256.05,393.57 256.21,393.57 256.37,393.57 256.53,393.57 256.69,393.57 256.85,393.57 257.01,393.57 257.17,393.57 257.33,393.57 257.49,393.57 257.65,393.56 257.81,393.56 257.97,393.56 258.13,393.56 258.29,393.56 258.45,393.56 258.61,393.56 258.77,393.56 258.93,393.56 259.09,393.56 259.25,393.56 259.41,393.56 259.57,393.56 259.73,393.56 259.89,393.56 260.05,393.56 260.21,393.56 260.37,393.56 260.53,393.56 260.69,393.56 260.85,393.56 261.01,393.56 261.17,393.56 261.33,393.56 261.49,393.56 261.65,393.56 261.81,393.56 261.97,393.56 262.13,393.56 262.29,393.56 262.45,393.56 262.61,393.55 262.77,393.49 262.93,393.29 263.09,392.86 263.25,392.32 263.41,392.08 263.57,392.38 263.73,392.93 263.89,393.33 264.05,393.5 264.21,393.55 264.37,393.55 264.53,393.55 264.69,393.55 264.85,393.55 265.01,393.55 265.17,393.55 265.33,393.55 265.49,393.55 265.65,393.55 265.81,393.55 265.97,393.55 266.13,393.55 266.29,393.55 266.45,393.55 266.61,393.55 266.77,393.55 266.93,393.53 267.09,393.47 267.25,393.28 267.41,393 267.57,392.82 267.73,392.93 267.89,393.21 268.05,393.43 268.21,393.52 268.37,393.54 268.53,393.55 268.69,393.55 268.85,393.55 269.01,393.55 269.17,393.55 269.33,393.55 269.49,393.53 269.65,393.47 269.81,393.29 269.97,392.94 270.13,392.65 270.29,392.69 270.45,393.02 270.61,393.34 270.77,393.49 270.93,393.54 271.09,393.54 271.25,393.54 271.41,393.54 271.57,393.54 271.73,393.54 271.89,393.54 272.05,393.54 272.21,393.54 272.37,393.54 272.53,393.54 272.69,393.54 272.85,393.54 273.01,393.54 273.17,393.54 273.33,393.54 273.49,393.54 273.65,393.54 273.81,393.54 273.97,393.54 274.13,393.54 274.29,393.53 274.45,393.52 274.61,393.45 274.77,393.32 274.93,393.18 275.09,393.15 275.25,393.25 275.41,393.31 275.57,393.17 275.73,392.75 275.89,392.15 276.05,391.65 276.21,391.6 276.37,392.03 276.53,392.64 276.69,393.11 276.85,393.32 277.01,393.32 277.17,393.23 277.33,393.22 277.49,393.32 277.65,393.44 277.81,393.51 277.97,393.53 278.13,393.53 278.29,393.53 278.45,393.53 278.61,393.53 278.77,393.53 278.93,393.53 279.09,393.53 279.25,393.53 279.41,393.53 279.57,393.53 279.73,393.53 279.89,393.53 280.05,393.53 280.21,393.53 280.37,393.53 280.53,393.53 280.69,393.53 280.85,393.53 281.01,393.53 281.17,393.53 281.33,393.53 281.49,393.53 281.65,393.53 281.81,393.53 281.97,393.53 282.13,393.53 282.29,393.53 282.45,393.53 282.61,393.53 282.77,393.53 282.93,393.53 283.09,393.52 283.25,393.51 283.41,393.44 283.57,393.26 283.73,392.96 283.89,392.75 284.05,392.83 284.21,393.12 284.37,393.37 284.53,393.49 284.69,393.52 284.85,393.52 285.01,393.52 285.17,393.52 285.33,393.52 285.49,393.52 285.65,393.52 285.81,393.52 285.97,393.52 286.13,393.52 286.29,393.52 286.45,393.52 286.61,393.52 286.77,393.52 286.93,393.5 287.09,393.41 287.25,393.19 287.41,392.86 287.57,392.65 287.73,392.67 287.89,392.66 288.05,392.39 288.21,392.1 288.37,392.16 288.53,392.6 288.69,393.09 288.85,393.38 289.01,393.49 289.17,393.51 289.33,393.52 289.49,393.52 289.65,393.52 289.81,393.52 289.97,393.52 290.13,393.52 290.29,393.52 290.45,393.51 290.61,393.5 290.77,393.45 290.93,393.29 291.09,393 291.25,392.76 291.41,392.8 291.57,393.08 291.73,393.35 291.89,393.47 292.05,393.51 292.21,393.51 292.37,393.51 292.53,393.51 292.69,393.51 292.85,393.51 293.01,393.51 293.17,393.51 293.33,393.51 293.49,393.51 293.65,393.51 293.81,393.51 293.97,393.51 294.13,393.51 294.29,393.51 294.45,393.5 294.61,393.48 294.77,393.41 294.93,393.3 295.09,393.21 295.25,393.24 295.41,393.36 295.57,393.45 295.73,393.49 295.89,393.5 296.05,393.51 296.21,393.51 296.37,393.51 296.53,393.51 296.69,393.51 296.85,393.51 297.01,393.51 297.17,393.5 297.33,393.5 297.49,393.5 297.65,393.5 297.81,393.5 297.97,393.5 298.13,393.5 298.29,393.5 298.45,393.5 298.61,393.5 298.77,393.5 298.93,393.5 299.09,393.5 299.25,393.5 299.41,393.5 299.57,393.5 299.73,393.5 299.89,393.5 300.05,393.5 300.21,393.5 300.37,393.5 300.53,393.5 300.69,393.5 300.85,393.5 301.01,393.5 301.17,393.5 301.33,393.5 301.49,393.49 301.65,393.46 301.81,393.36 301.97,393.13 302.13,392.89 302.29,392.84 302.45,393.04 302.61,393.23 302.77,393.23 302.93,393.05 303.09,392.82 303.25,392.66 303.41,392.69 303.57,392.92 303.73,393.21 303.89,393.4 304.05,393.47 304.21,393.49 304.37,393.49 304.53,393.49 304.69,393.49 304.85,393.49 305.01,393.49 305.17,393.49 305.33,393.49 305.49,393.49 305.65,393.49 305.81,393.49 305.97,393.49 306.13,393.49 306.29,393.49 306.45,393.49 306.61,393.49 306.77,393.49 306.93,393.49 307.09,393.49 307.25,393.49 307.41,393.49 307.57,393.49 307.73,393.49 307.89,393.49 308.05,393.49 308.21,393.49 308.37,393.49 308.53,393.49 308.69,393.49 308.85,393.48 309.01,393.48 309.17,393.45 309.33,393.35 309.49,393.08 309.65,392.69 309.81,392.5 309.97,392.69 310.13,393.07 310.29,393.34 310.45,393.42 310.61,393.34 310.77,393.11 310.93,392.83 311.09,392.74 311.25,392.94 311.41,393.23 311.57,393.41 311.73,393.46 311.89,393.47 312.05,393.46 312.21,393.38 312.37,393.2 312.53,392.89 312.69,392.4 312.85,391.71 313.01,391.21 313.17,391.53 313.33,392.44 313.49,393.14 313.65,393.41 313.81,393.46 313.97,393.43 314.13,393.3 314.29,393.06 314.45,392.8 314.61,392.69 314.77,392.82 314.93,393.07 315.09,393.3 315.25,393.42 315.41,393.47 315.57,393.47 315.73,393.48 315.89,393.48 316.05,393.48 316.21,393.48 316.37,393.47 316.53,393.47 316.69,393.47 316.85,393.47 317.01,393.47 317.17,393.47 317.33,393.47 317.49,393.47 317.65,393.47 317.81,393.47 317.97,393.47 318.13,393.47 318.29,393.47 318.45,393.47 318.61,393.47 318.77,393.47 318.93,393.47 319.09,393.47 319.25,393.47 319.41,393.47 319.57,393.47 319.73,393.47 319.89,393.47 320.05,393.47 320.21,393.47 320.37,393.47 320.53,393.47 320.69,393.47 320.85,393.47 321.01,393.47 321.17,393.46 321.33,393.45 321.49,393.4 321.65,393.29 321.81,393.18 321.97,393.17 322.13,393.27 322.29,393.38 322.45,393.44 322.61,393.43 322.77,393.35 322.93,393.24 323.09,393.17 323.25,393.22 323.41,393.33 323.57,393.42 323.73,393.45 323.89,393.46 324.05,393.46 324.21,393.46 324.37,393.46 324.53,393.46 324.69,393.46 324.85,393.46 325.01,393.46 325.17,393.46 325.33,393.46 325.49,393.46 325.65,393.46 325.81,393.46 325.97,393.46 326.13,393.46 326.29,393.46 326.45,393.46 326.61,393.46 326.77,393.46 326.93,393.46 327.09,393.46 327.25,393.46 327.41,393.46 327.57,393.46 327.73,393.45 327.89,393.45 328.05,393.45 328.21,393.45 328.37,393.45 328.53,393.45 328.69,393.45 328.85,393.45 329.01,393.44 329.17,393.39 329.33,393.18 329.49,392.63 329.65,391.86 329.81,391.47 329.97,391.86 330.13,392.63 330.29,393.17 330.45,393.38 330.61,393.43 330.77,393.44 330.93,393.44 331.09,393.44 331.25,393.44 331.41,393.44 331.57,393.44 331.73,393.44 331.89,393.43 332.05,393.43 332.21,393.43 332.37,393.43 332.53,393.42 332.69,393.42 332.85,393.41 333.01,393.41 333.17,393.4 333.33,393.39 333.49,393.37 333.65,393.35 333.81,393.32 333.97,393.23 334.13,392.46 334.29,386.81 334.45,365.95 334.61,333.08 334.77,324.6 334.93,352.73 335.09,380.84 335.25,391.26 335.41,393.1 335.57,393.3 335.73,393.34 335.89,393.36 336.05,393.38 336.21,393.39 336.37,393.4 336.53,393.41 336.69,393.41 336.85,393.42 337.01,393.42 337.17,393.42 337.33,393.42 337.49,393.42 337.65,393.41 337.81,393.34 337.97,393.14 338.13,392.84 338.29,392.65 338.45,392.78 338.61,393.08 338.77,393.29 338.93,393.32 339.09,393.15 339.25,392.88 339.41,392.72 339.57,392.85 339.73,393.13 339.89,393.33 340.05,393.41 340.21,393.43 340.37,393.43 340.53,393.43 340.69,393.43 340.85,393.43 341.01,393.43 341.17,393.43 341.33,393.43 341.49,393.43 341.65,393.43 341.81,393.43 341.97,393.43 342.13,393.42 342.29,393.41 342.45,393.32 342.61,392.87 342.77,391.45 342.93,389.21 343.09,387.99 343.25,389.21 343.41,391.45 343.57,392.86 343.73,393.3 343.89,393.33 344.05,393.17 344.21,392.94 344.37,392.83 344.53,392.95 344.69,393.17 344.85,393.29 345.01,393.2 345.17,392.95 345.33,392.76 345.49,392.81 345.65,393.07 345.81,393.29 345.97,393.39 346.13,393.42 346.29,393.43 346.45,393.43 346.61,393.43 346.77,393.43 346.93,393.43 347.09,393.43 347.25,393.43 347.41,393.43 347.57,393.43 347.73,393.42 347.89,393.42 348.05,393.42 348.21,393.4 348.37,393.34 348.53,393.23 348.69,393.11 348.85,393.02 349.01,392.92 349.17,392.81 349.33,392.77 349.49,392.77 349.65,392.72 349.81,392.72 349.97,392.86 350.13,392.77 350.29,391.85 350.45,390.21 350.61,389.3 350.77,390.22 350.93,391.92 351.09,392.99 351.25,393.34 351.41,393.4 351.57,393.41 351.73,393.41 351.89,393.41 352.05,393.41 352.21,393.41 352.37,393.38 352.53,393.2 352.69,392.5 352.85,391.19 353.01,390.39 353.17,390.96 353.33,391.84 353.49,392.01 353.65,391.97 353.81,392.3 353.97,392.84 354.13,393.22 354.29,393.37 354.45,393.4 354.61,393.41 354.77,393.41 354.93,393.4 355.09,393.4 355.25,393.4 355.41,393.39 355.57,393.29 355.73,392.7 355.89,390.73 356.05,387.67 356.21,386.56 356.37,388.87 356.53,391.73 356.69,393.05 356.85,393.35 357.01,393.39 357.17,393.39 357.33,393.39 357.49,393.39 357.65,393.34 357.81,393 357.97,391.72 358.13,389.35 358.29,387.96 358.45,389.35 358.61,391.72 358.77,393 358.93,393.33 359.09,393.38 359.25,393.38 359.41,393.37 359.57,393.28 359.73,392.65 359.89,390.24 360.05,385.78 360.21,383.18 360.37,385.78 360.53,390.24 360.69,392.65 360.85,393.28 361.01,393.37 361.17,393.38 361.33,393.39 361.49,393.39 361.65,393.39 361.81,393.39 361.97,393.39 362.13,393.39 362.29,393.36 362.45,393.16 362.61,392.38 362.77,390.94 362.93,390.1 363.09,390.94 363.25,392.34 363.41,393.04 363.57,393.11 363.73,393.04 363.89,393.09 364.05,393.23 364.21,393.34 364.37,393.38 364.53,393.4 364.69,393.4 364.85,393.4 365.01,393.4 365.17,393.4 365.33,393.4 365.49,393.4 365.65,393.4 365.81,393.4 365.97,393.4 366.13,393.4 366.29,393.4 366.45,393.4 366.61,393.4 366.77,393.4 366.93,393.4 367.09,393.4 367.25,393.39 367.41,393.39 367.57,393.39 367.73,393.39 367.89,393.39 368.05,393.39 368.21,393.39 368.37,393.37 368.53,393.25 368.69,392.78 368.85,391.92 369.01,391.41 369.17,391.92 369.33,392.78 369.49,393.24 369.65,393.36 369.81,393.38 369.97,393.38 370.13,393.38 370.29,393.38 370.45,393.35 370.61,393.12 370.77,392.06 370.93,389.58 371.09,387.29 371.25,387.96 371.41,390.71 371.57,392.64 371.73,393.26 371.89,393.34 372.05,393.28 372.21,393.09 372.37,392.85 372.53,392.74 372.69,392.89 372.85,393.14 373.01,393.31 373.17,393.37 373.33,393.38 373.49,393.38 373.65,393.38 373.81,393.38 373.97,393.38 374.13,393.38 374.29,393.38 374.45,393.38 374.61,393.38 374.77,393.38 374.93,393.38 375.09,393.38 375.25,393.38 375.41,393.38 375.57,393.35 375.73,393.2 375.89,392.62 376.05,391.54 376.21,390.91 376.37,391.54 376.53,392.62 376.69,393.2 376.85,393.35 377.01,393.37 377.17,393.38 377.33,393.38 377.49,393.38 377.65,393.38 377.81,393.38 377.97,393.38 378.13,393.38 378.29,393.38 378.45,393.38 378.61,393.37 378.77,393.37 378.93,393.37 379.09,393.37 379.25,393.37 379.41,393.37 379.57,393.37 379.73,393.37 379.89,393.36 380.05,393.36 380.21,393.35 380.37,393.27 380.53,392.74 380.69,390.72 380.85,386.98 381.01,384.79 381.17,386.98 381.33,390.71 381.49,392.73 381.65,393.26 381.81,393.33 381.97,393.32 382.13,393.22 382.29,392.49 382.45,389.69 382.61,384.52 382.77,381.49 382.93,384.52 383.09,389.69 383.25,392.5 383.41,393.23 383.57,393.33 383.73,393.34 383.89,393.35 384.05,393.35 384.21,393.35 384.37,393.32 384.53,393.12 384.69,392.34 384.85,390.91 385.01,390.07 385.17,390.91 385.33,392.34 385.49,393.12 385.65,393.33 385.81,393.36 385.97,393.36 386.13,393.36 386.29,393.36 386.45,393.36 386.61,393.36 386.77,393.36 386.93,393.36 387.09,393.36 387.25,393.36 387.41,393.36 387.57,393.36 387.73,393.36 387.89,393.36 388.05,393.36 388.21,393.36 388.37,393.36 388.53,393.36 388.69,393.36 388.85,393.35 389.01,393.32 389.17,393.18 389.33,392.9 389.49,392.62 389.65,392.6 389.81,392.86 389.97,393.15 390.13,393.3 390.29,393.35 390.45,393.36 390.61,393.36 390.77,393.36 390.93,393.35 391.09,393.35 391.25,393.35 391.41,393.34 391.57,393.3 391.73,392.96 391.89,391.68 392.05,389.3 392.21,387.92 392.37,389.3 392.53,391.67 392.69,392.95 392.85,393.26 393.01,393.21 393.17,393 393.33,392.77 393.49,392.72 393.65,392.92 393.81,393.16 393.97,393.3 394.13,393.34 394.29,393.35 394.45,393.35 394.61,393.35 394.77,393.35 394.93,393.35 395.09,393.35 395.25,393.35 395.41,393.35 395.57,393.35 395.73,393.35 395.89,393.35 396.05,393.35 396.21,393.35 396.37,393.35 396.53,393.35 396.69,393.35 396.85,393.35 397.01,393.35 397.17,393.35 397.33,393.35 397.49,393.35 397.65,393.35 397.81,393.35 397.97,393.35 398.13,393.35 398.29,393.35 398.45,393.35 398.61,393.35 398.77,393.34 398.93,393.34 399.09,393.34 399.25,393.34 399.41,393.34 399.57,393.3 399.73,393.03 399.89,392.02 400.05,390.15 400.21,389.06 400.37,390.15 400.53,392.02 400.69,393.03 400.85,393.29 401.01,393.33 401.17,393.33 401.33,393.31 401.49,393.22 401.65,393.05 401.81,392.88 401.97,392.88 402.13,393.03 402.29,393.14 402.45,393.06 402.61,392.87 402.77,392.77 402.93,392.89 403.09,393.11 403.25,393.27 403.41,393.32 403.57,393.34 403.73,393.33 403.89,393.29 404.05,393.15 404.21,392.85 404.37,392.54 404.53,392.5 404.69,392.77 404.85,393.09 405.01,393.26 405.17,393.32 405.33,393.33 405.49,393.33 405.65,393.33 405.81,393.32 405.97,393.32 406.13,393.32 406.29,393.31 406.45,393.26 406.61,392.91 406.77,391.34 406.93,387.31 407.09,382.27 407.25,381.08 407.41,385.17 407.57,390.04 407.73,392.51 407.89,393.18 408.05,393.29 408.21,393.31 408.37,393.31 408.53,393.32 408.69,393.32 408.85,393.32 409.01,393.32 409.17,393.32 409.33,393.32 409.49,393.32 409.65,393.32 409.81,393.31 409.97,393.25 410.13,392.93 410.29,391.95 410.45,390.38 410.61,389.53 410.77,390.38 410.93,391.95 411.09,392.93 411.25,393.25 411.41,393.31 411.57,393.32 411.73,393.32 411.89,393.32 412.05,393.32 412.21,393.32 412.37,393.32 412.53,393.31 412.69,393.24 412.85,393.06 413.01,392.73 413.17,392.47 413.33,392.54 413.49,392.86 413.65,393.14 413.81,393.26 413.97,393.22 414.13,392.84 414.29,391.64 414.45,389.74 414.61,388.7 414.77,389.74 414.93,391.64 415.09,392.84 415.25,393.23 415.41,393.3 415.57,393.31 415.73,393.31 415.89,393.31 416.05,393.32 416.21,393.32 416.37,393.32 416.53,393.32 416.69,393.32 416.85,393.32 417.01,393.32 417.17,393.32 417.33,393.32 417.49,393.32 417.65,393.32 417.81,393.32 417.97,393.32 418.13,393.32 418.29,393.32 418.45,393.32 418.61,393.31 418.77,393.31 418.93,393.31 419.09,393.31 419.25,393.31 419.41,393.31 419.57,393.31 419.73,393.31 419.89,393.31 420.05,393.31 420.21,393.31 420.37,393.31 420.53,393.31 420.69,393.31 420.85,393.31 421.01,393.31 421.17,393.31 421.33,393.31 421.49,393.31 421.65,393.31 421.81,393.31 421.97,393.31 422.13,393.31 422.29,393.3 422.45,393.3 422.61,393.3 422.77,393.3 422.93,393.27 423.09,393.17 423.25,392.94 423.41,392.63 423.57,392.45 423.73,392.32 423.89,391.64 424.05,390.27 424.21,389.49 424.37,390.35 424.53,391.92 424.69,392.9 424.85,393.22 425.01,393.28 425.17,393.29 425.33,393.29 425.49,393.29 425.65,393.29 425.81,393.29 425.97,393.29 426.13,393.29 426.29,393.29 426.45,393.29 426.61,393.29 426.77,393.28 426.93,393.28 427.09,393.28 427.25,393.28 427.41,393.28 427.57,393.28 427.73,393.27 427.89,393.27 428.05,393.27 428.21,393.26 428.37,393.26 428.53,393.25 428.69,393.24 428.85,393.17 429.01,392.8 429.17,391.69 429.33,389.91 429.49,388.94 429.65,389.9 429.81,391.65 429.97,392.75 430.13,393.1 430.29,393.15 430.45,393.14 430.61,393.11 430.77,393.08 430.93,393.04 431.09,392.98 431.25,392.9 431.41,392.62 431.57,390.93 431.73,382.03 431.89,351.22 432.05,286.98 432.21,216.45 432.37,200.76 432.53,256.2 432.69,329.25 432.85,373.38 433.01,388.85 433.17,392.28 433.33,392.83 433.49,392.95 433.65,393.02 433.81,393.06 433.97,393.1 434.13,393.13 434.29,393.15 434.45,393.17 434.61,393.18 434.77,393.2 434.93,393.2 435.09,393.21 435.25,393.22 435.41,393.22 435.57,393.23 435.73,393.23 435.89,393.24 436.05,393.24 436.21,393.24 436.37,393.24 436.53,393.24 436.69,393.24 436.85,393.24 437.01,393.24 437.17,393.24 437.33,393.24 437.49,393.24 437.65,393.23 437.81,393.21 437.97,393.05 438.13,392.37 438.29,390.65 438.45,388.22 438.61,386.97 438.77,388.21 438.93,390.63 439.09,392.35 439.25,393.01 439.41,393.16 439.57,393.17 439.73,393.15 439.89,393.13 440.05,393.04 440.21,392.54 440.37,390.02 440.53,381.22 440.69,361.75 440.85,336.91 441.01,324.83 441.17,336.91 441.33,361.75 441.49,381.22 441.65,390.02 441.81,392.55 441.97,393.05 442.13,393.13 442.29,393.16 442.45,393.18 442.61,393.2 442.77,393.21 442.93,393.22 443.09,393.23 443.25,393.23 443.41,393.24 443.57,393.24 443.73,393.24 443.89,393.25 444.05,393.25 444.21,393.25 444.37,393.25 444.53,393.25 444.69,393.25 444.85,393.26 445.01,393.26 445.17,393.26 445.33,393.26 445.49,393.26 445.65,393.26 445.81,393.26 445.97,393.26 446.13,393.26 446.29,393.25 446.45,393.25 446.61,393.25 446.77,393.25 446.93,393.25 447.09,393.24 447.25,393.23 447.41,393.15 447.57,392.75 447.73,391.38 447.89,388.33 448.05,384.44 448.21,382.54 448.37,384.44 448.53,388.33 448.69,391.38 448.85,392.75 449.01,393.15 449.17,393.23 449.33,393.24 449.49,393.25 449.65,393.25 449.81,393.25 449.97,393.25 450.13,393.25 450.29,393.25 450.45,393.25 450.61,393.26 450.77,393.26 450.93,393.26 451.09,393.26 451.25,393.26 451.41,393.26 451.57,393.26 451.73,393.26 451.89,393.26 452.05,393.26 452.21,393.26 452.37,393.26 452.53,393.25 452.69,393.25 452.85,393.25 453.01,393.25 453.17,393.25 453.33,393.25 453.49,393.25 453.65,393.25 453.81,393.25 453.97,393.25 454.13,393.25 454.29,393.25 454.45,393.25 454.61,393.25 454.77,393.25 454.93,393.25 455.09,393.24 455.25,393.24 455.41,393.24 455.57,393.24 455.73,393.24 455.89,393.24 456.05,393.23 456.21,393.23 456.37,393.23 456.53,393.22 456.69,393.22 456.85,393.21 457.01,393.21 457.17,393.2 457.33,393.19 457.49,393.17 457.65,393.09 457.81,392.67 457.97,390.89 458.13,385.65 458.29,375.41 458.45,363.39 458.61,357.79 458.77,363.39 458.93,375.41 459.09,385.64 459.25,390.89 459.41,392.66 459.57,393.08 459.73,393.16 459.89,393.18 460.05,393.19 460.21,393.2 460.37,393.2 460.53,393.21 460.69,393.21 460.85,393.22 461.01,393.22 461.17,393.22 461.33,393.22 461.49,393.22 461.65,393.22 461.81,393.22 461.97,393.22 462.13,393.22 462.29,393.22 462.45,393.22 462.61,393.22 462.77,393.22 462.93,393.22 463.09,393.22 463.25,393.22 463.41,393.22 463.57,393.22 463.73,393.22 463.89,393.21 464.05,393.21 464.21,393.21 464.37,393.21 464.53,393.2 464.69,393.2 464.85,393.2 465.01,393.2 465.17,393.19 465.33,393.19 465.49,393.18 465.65,393.17 465.81,393.17 465.97,393.16 466.13,393.15 466.29,393.13 466.45,393.12 466.61,393.1 466.77,393.07 466.93,393.03 467.09,392.91 467.25,392.36 467.41,390.15 467.57,383.27 467.73,367.56 467.89,342.33 468.05,316.35 468.21,304.99 468.37,316.34 468.53,342.33 468.69,367.55 468.85,383.27 469.01,390.14 469.17,392.35 469.33,392.9 469.49,393.02 469.65,393.06 469.81,393.08 469.97,393.1 470.13,393.12 470.29,393.13 470.45,393.14 470.61,393.14 470.77,393.15 470.93,393.15 471.09,393.16 471.25,393.16 471.41,393.16 471.57,393.16 471.73,393.16 471.89,393.17 472.05,393.17 472.21,393.17 472.37,393.17 472.53,393.16 472.69,393.16 472.85,393.16 473.01,393.16 473.17,393.16 473.33,393.16 473.49,393.15 473.65,393.15 473.81,393.15 473.97,393.14 474.13,393.14 474.29,393.13 474.45,393.13 474.61,393.12 474.77,393.11 474.93,393.11 475.09,393.1 475.25,393.09 475.41,393.08 475.57,393.07 475.73,393.05 475.89,393.04 476.05,393.02 476.21,393 476.37,392.97 476.53,392.95 476.69,392.91 476.85,392.87 477.01,392.83 477.17,392.77 477.33,392.7 477.49,392.61 477.65,392.45 477.81,391.97 477.97,390.24 478.13,384.37 478.29,367.9 478.45,330.93 478.61,266.32 478.77,181.55 478.93,105.26 479.09,74.1 479.25,105.25 479.41,181.55 479.57,266.32 479.73,330.93 479.89,367.89 480.05,384.37 480.21,390.23 480.37,391.96 480.53,392.44 480.69,392.6 480.85,392.69 481.01,392.76 481.17,392.81 481.33,392.86 481.49,392.89 481.65,392.92 481.81,392.95 481.97,392.97 482.13,392.99 482.29,393.01 482.45,393.02 482.61,393.03 482.77,393.05 482.93,393.05 483.09,393.06 483.25,393.07 483.41,393.07 483.57,393.08 483.73,393.08 483.89,393.09 484.05,393.09 484.21,393.09 484.37,393.09 484.53,393.09 484.69,393.09 484.85,393.09 485.01,393.09 485.17,393.09 485.33,393.09 485.49,393.08 485.65,393.08 485.81,393.08 485.97,393.07 486.13,393.07 486.29,393.06 486.45,393.05 486.61,393.04 486.77,393.03 486.93,393.02 487.09,393.01 487.25,392.99 487.41,392.98 487.57,392.96 487.73,392.93 487.89,392.91 488.05,392.88 488.21,392.84 488.37,392.79 488.53,392.73 488.69,392.62 488.85,392.34 489.01,391.55 489.17,389.32 489.33,383.75 489.49,371.58 489.65,348.82 489.81,312.87 489.97,265.77 490.13,216.54 490.29,179.4 490.45,167.41 490.61,185.15 490.77,225.91 490.93,275.75 491.09,321.11 491.25,354.39 491.41,374.73 491.57,385.26 491.73,389.95 491.89,391.77 492.05,392.41 492.21,392.64 492.37,392.74 492.53,392.79 492.69,392.83 492.85,392.87 493.01,392.9 493.17,392.92 493.33,392.94 493.49,392.96 493.65,392.97 493.81,392.98 493.97,392.99 494.13,393 494.29,393.01 494.45,393.01 494.61,393.02 494.77,393.02 494.93,393.02 495.09,393.01 495.25,393.01 495.41,393 495.57,392.99 495.73,392.98 495.89,392.96 496.05,392.94 496.21,392.87 496.37,392.67 496.53,392.08 496.69,390.46 496.85,386.6 497.01,378.8 497.17,365.58 497.33,347.16 497.49,326.79 497.65,310.42 497.81,304.1 497.97,310.42 498.13,326.79 498.29,347.17 498.45,365.59 498.61,378.81 498.77,386.62 498.93,390.48 499.09,392.11 499.25,392.7 499.41,392.9 499.57,392.97 499.73,393 499.89,393.02 500.05,393.04 500.21,393.06 500.37,393.07 500.53,393.08 500.69,393.09 500.85,393.1 501.01,393.1 501.17,393.11 501.33,393.11 501.49,393.12 501.65,393.12 501.81,393.13 501.97,393.13 502.13,393.13 502.29,393.13 502.45,393.14 502.61,393.14 502.77,393.14 502.93,393.14 503.09,393.15 503.25,393.15 503.41,393.15 503.57,393.15 503.73,393.15 503.89,393.15 504.05,393.15 504.21,393.15 504.37,393.15 504.53,393.15 504.69,393.16 504.85,393.16 505.01,393.16 505.18,393.16 505.34,393.16 505.5,393.16 505.66,393.16 505.82,393.16 505.98,393.16 506.14,393.16 506.3,393.16 506.46,393.16 506.62,393.16 506.78,393.16 506.94,393.16 507.1,393.16 507.26,393.16 507.42,393.16 507.58,393.16 507.74,393.16 507.9,393.16 508.06,393.16 508.22,393.16 508.38,393.16 508.54,393.16 508.7,393.16 508.86,393.16 509.02,393.16 509.18,393.16 509.34,393.16 509.5,393.16 509.66,393.16 509.82,393.16 509.98,393.16 510.14,393.16 510.3,393.15 510.46,393.15 510.62,393.15 510.78,393.15 510.94,393.15 511.1,393.15 511.26,393.15 511.42,393.15 511.58,393.15 511.74,393.15 511.9,393.15 512.06,393.15 512.22,393.14 512.38,393.14 512.54,393.14 512.7,393.14 512.86,393.14 513.02,393.14 513.18,393.13 513.34,393.13 513.5,393.13 513.66,393.12 513.82,393.12 513.98,393.12 514.14,393.11 514.3,393.11 514.46,393.1 514.62,393.1 514.78,393.09 514.94,393.08 515.1,393.06 515.26,393.02 515.42,392.91 515.58,392.63 515.74,391.99 515.9,390.63 516.06,388.1 516.22,383.97 516.38,378.12 516.54,371.07 516.7,364.05 516.86,358.81 517.02,356.86 517.18,358.81 517.34,364.05 517.5,371.06 517.66,378.11 517.82,383.96 517.98,388.08 518.14,390.61 518.3,391.96 518.46,392.61 518.62,392.88 518.78,392.98 518.94,393.02 519.1,393.04 519.26,393.04 519.42,393.04 519.58,393.04 519.74,393.04 519.9,393.04 520.06,393.03 520.22,393.03 520.38,393.02 520.54,393.01 520.7,393 520.86,392.97 521.02,392.92 521.18,392.78 521.34,392.36 521.5,391.22 521.66,388.5 521.82,383 521.98,373.7 522.14,360.73 522.3,346.38 522.46,334.85 522.62,330.4 522.78,334.81 522.94,346.25 523.1,360.23 523.26,371.93 523.42,377.76 523.58,376.09 523.74,368.16 523.9,358.89 524.06,354.88 524.22,359.45 524.38,369.91 524.54,380.58 524.7,387.75 524.86,391.23 525.02,392.51 525.18,392.87 525.34,392.96 525.5,392.99 525.66,393.01 525.82,393.02 525.98,393.03 526.14,393.03 526.3,393.04 526.46,393.04 526.62,393.05 526.78,393.05 526.94,393.05 527.1,393.05 527.26,393.05 527.42,393.04 527.58,393.04 527.74,393.04 527.9,393.03 528.06,393.02 528.22,393.01 528.38,392.98 528.54,392.93 528.7,392.8 528.86,392.51 529.02,391.87 529.18,390.6 529.34,388.25 529.5,384.36 529.66,378.55 529.82,370.79 529.98,361.66 530.14,352.42 530.3,344.78 530.46,340.44" fill="none" stroke="#1fe5cb" stroke-width="1.4" stroke-linejoin="round"/><path d="M183.84 391.8V393H186.78V391.8M187.33 391.8V393H190.43V391.8M237.1 391.8V393H240.6V391.8M274.63 391.8V393H277.66V391.8M311.75 391.8V393H314.37V391.8M333.46 355.1V324H335.99V355.1M333.46 391.8V393H335.99V391.8M354.91 391.8V393H357.45V391.8M369.87 391.8V393H372.41V391.8M405.88 386V380H408.53V386M405.88 391.8V393H408.53V391.8M430.95 293.9V202.2H433.7V293.9M430.95 391.8V393H433.7V391.8M488.61 278.8V175.2H492.27V278.8M488.61 391.8V393H492.27V391.8" fill="none" stroke="#fff" stroke-width="1"/><text transform="translate(200.51 384.8) rotate(-90)" font-size="18.2" fill="#fff">4.18</text><text transform="translate(204.08 383.5) rotate(-90)" font-size="18.2" fill="#fff">4.69</text><text transform="translate(254.05 387.3) rotate(-90)" font-size="18.2" fill="#fff">5.95</text><text transform="translate(291.35 387.3) rotate(-90)" font-size="18.2" fill="#fff">4.47</text><text transform="translate(328.26 387.3) rotate(-90)" font-size="18.2" fill="#fff">3.20</text><text transform="translate(349.92 317.5) rotate(-90)" font-size="18.2" fill="#fff">2.90</text><text transform="translate(371.38 379) rotate(-90)" font-size="18.2" fill="#fff">2.91</text><text transform="translate(386.34 381.2) rotate(-90)" font-size="18.2" fill="#fff">2.96</text><text transform="translate(422.4 375) rotate(-90)" font-size="18.2" fill="#fff">3.31</text><text transform="translate(447.53 193.9) rotate(-90)" font-size="18.2" fill="#fff">3.60</text><text transform="translate(505.64 165.2) rotate(-90)" font-size="18.2" fill="#fff">6.42</text><rect x="77.5" y="55.5" width="476" height="354" fill="none" stroke="#fff" stroke-width="1.15"/><text x="97.5" y="428" font-size="13.33" text-anchor="middle" fill="#b4b4b4" >0</text><text x="177.5" y="428" font-size="13.33" text-anchor="middle" fill="#b4b4b4" >500</text><text x="257.5" y="428" font-size="13.33" text-anchor="middle" fill="#b4b4b4" >1000</text><text x="337.5" y="428" font-size="13.33" text-anchor="middle" fill="#b4b4b4" >1500</text><text x="417.5" y="428" font-size="13.33" text-anchor="middle" fill="#b4b4b4" >2000</text><text x="497.5" y="428" font-size="13.33" text-anchor="middle" fill="#b4b4b4" >2500</text><text x="68.5" y="403.5" font-size="13.33" text-anchor="end" fill="#b4b4b4" >0</text><text x="68.5" y="363.5" font-size="13.33" text-anchor="end" fill="#b4b4b4" >2500</text><text x="68.5" y="322.5" font-size="13.33" text-anchor="end" fill="#b4b4b4" >5000</text><text x="68.5" y="281.5" font-size="13.33" text-anchor="end" fill="#b4b4b4" >7500</text><text x="68.5" y="240.5" font-size="13.33" text-anchor="end" fill="#b4b4b4" >10000</text><text x="68.5" y="199.5" font-size="13.33" text-anchor="end" fill="#b4b4b4" >12500</text><text x="68.5" y="158.5" font-size="13.33" text-anchor="end" fill="#b4b4b4" >15000</text><text x="68.5" y="117.5" font-size="13.33" text-anchor="end" fill="#b4b4b4" >17500</text><text x="68.5" y="76.5" font-size="13.33" text-anchor="end" fill="#b4b4b4" >20000</text><text x="307" y="21" font-size="16" text-anchor="middle" fill="#b4b4b4" >Spectre</text><text x="315" y="47" font-size="16" text-anchor="middle" fill="#b4b4b4" >neon_agpeg_Light_60_secs_2019-12-07T19-58-22_003.fits</text><text x="119.3" y="179.1" font-size="32" text-anchor="start" fill="#aaaaff" >R=1106</text></svg></div><div class="sb"><span>x=232.241      y=14399.6</span><svg class="sg" width="14" height="14" viewBox="0 0 14 14"><g fill="#c4c0ba"><circle cx="11.5" cy="2.4" r="0.75"/><circle cx="8.4" cy="5.5" r="0.75"/><circle cx="11.5" cy="5.5" r="0.75"/><circle cx="5.3" cy="8.5" r="0.75"/><circle cx="8.4" cy="8.5" r="0.75"/><circle cx="11.5" cy="8.5" r="0.75"/><circle cx="2.3" cy="11.6" r="0.75"/><circle cx="5.3" cy="11.6" r="0.75"/><circle cx="8.4" cy="11.6" r="0.75"/><circle cx="11.5" cy="11.6" r="0.75"/></g></svg></div></div></body></html>
